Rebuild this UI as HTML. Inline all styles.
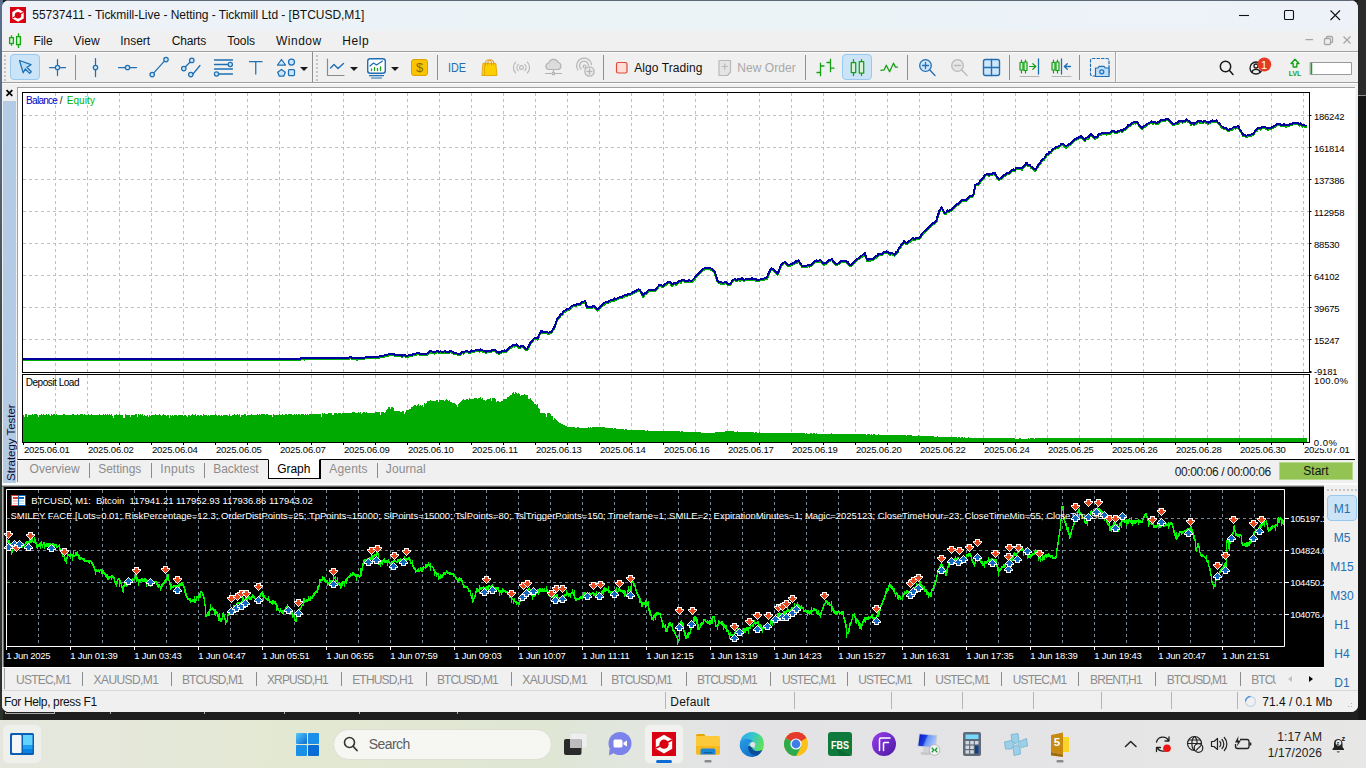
<!DOCTYPE html>
<html><head><meta charset="utf-8">
<style>
*{box-sizing:border-box;margin:0;padding:0}
html,body{width:1366px;height:768px;overflow:hidden}
body{background:#1f1f1f;font-family:"Liberation Sans",sans-serif;font-size:12px;color:#000;position:relative}
.abs{position:absolute}
#win{position:absolute;left:2px;top:0;width:1356px;height:712px;background:#f0f0f0;border-radius:8px 8px 7px 7px;overflow:hidden}
#title{position:absolute;left:0;top:0;width:100%;height:31px;background:linear-gradient(90deg,#eef2f8 0%,#ebf3f7 35%,#ebf3f7 65%,#eef2f8 100%);border-top:1px solid #5c6874}
#title .t{position:absolute;left:30px;top:8px;font-size:13px;color:#1a1a1a;white-space:nowrap}
#menu{position:absolute;left:0;top:31px;width:100%;height:21px;background:#f0f0f0}
#menu span{position:absolute;top:3px;font-size:13px;color:#1a1a1a}
#tbar{position:absolute;left:0;top:51px;width:100%;height:32px;background:#f0f0f0;border-top:1px solid #a0a0a0;border-bottom:1px solid #a0a0a0;box-shadow:inset 0 1px 0 #fbfbfb}
#tester{position:absolute;left:0;top:84px;width:1356px;height:400px;background:#f0f0f0}
#taskbar{position:absolute;left:0;top:720px;width:1366px;height:48px;background:linear-gradient(90deg,#e5e7de 0%,#e3e8d2 22%,#dfe6d4 40%,#e2e6e0 47%,#e3e3e6 54%,#e4e4e6 75%,#e7e7e6 100%)}

.sep{position:absolute;top:3px;width:1px;height:25px;background:#8e8e8e}
.grip{position:absolute;top:3px;width:2px;height:26px;background-image:repeating-linear-gradient(180deg,#c4c4c4 0 2px,transparent 2px 4px)}
.ic{position:absolute;overflow:visible}
.selbtn{position:absolute;top:2px;height:26px;background:#cce4f7;border:1px solid #99c9ef;border-radius:4px}
.dd{position:absolute;top:15px;width:0;height:0;border-left:4px solid transparent;border-right:4px solid transparent;border-top:4px solid #1a1a1a}
.ttxt{position:absolute;top:8px;font-size:12px;white-space:nowrap}

.ax{position:absolute;font-size:9.5px;letter-spacing:-.22px;color:#000;white-space:nowrap;line-height:11px}
.cax{position:absolute;font-size:9.5px;letter-spacing:-.22px;color:#fff;white-space:nowrap;line-height:11px}
.ttab{position:absolute;top:462px;font-size:12px;color:#8c8c8c;white-space:nowrap}
.tsep{position:absolute;top:463px;width:1px;height:15px;background:#8c8c8c}
.ctab{position:absolute;top:673px;font-size:12px;color:#8c8c8c;white-space:nowrap}
.csep{position:absolute;top:672px;width:1px;height:14px;background:#8c8c8c}
.tf{position:absolute;left:1325px;width:34px;text-align:center;font-size:12px;color:#1e6fb4;line-height:16px}
</style></head><body>
<div class="abs" style="left:1358px;top:0;width:8px;height:720px;background:#161616"></div><div class="abs" style="left:1358px;top:0;width:8px;height:96px;background:#2b2b2b;border-bottom:1px solid #8a8a8a"></div>
<div class="abs" style="left:0;top:0;width:3px;height:720px;background:linear-gradient(180deg,#586e8a 0,#566a80 20%,#3a4440 50%,#2a302a 100%)"></div>
<div id="win">
 <div id="title"></div>
 <div id="menu"></div>
 
<svg class="ic" style="left:0;top:0" width="1356" height="52" viewBox="2 0 1356 52" fill="none">
 <rect x="10" y="7" width="16" height="16" fill="#d90012"/>
 <path d="M18 8.700L23.700 12V18.600L18 21.700L12.300 18.600V12Z" fill="#fff"/>
 <circle cx="18" cy="15.200" r="3.200" fill="#d90012"/>
 <path d="M12.500 18L23.500 12.200" stroke="#d90012" stroke-width="1.300"/>
 <!-- menu candles -->
 <g stroke="#12a812" stroke-width="1.300"><path d="M11.500 35.300V45.800M18.500 33.300V48"/><rect x="9.600" y="37.700" width="3.800" height="5.800" fill="#d6f5d6"/><rect x="16.600" y="36.600" width="3.800" height="8" fill="#d6f5d6"/></g>
 <!-- window controls -->
 <g stroke="#111" stroke-width="1.100"><path d="M1239 15.500H1249"/><rect x="1284.500" y="10.500" width="9" height="9" rx="1"/><path d="M1330.500 10.500L1340 20M1340 10.500L1330.500 20"/></g>
 <g stroke="#a6a6a6" stroke-width="1.300"><path d="M1305.500 39.600H1313"/><rect x="1324.500" y="38.500" width="6" height="6" rx="1"/><path d="M1326.500 38.500V37.500A1 1 0 0 1 1327.500 36.500H1331.500A1 1 0 0 1 1332.500 37.500V41.500A1 1 0 0 1 1331.500 42.500H1330.500"/><path d="M1343.500 36.500L1350.500 43.500M1350.500 36.500L1343.500 43.500"/></g>
</svg>
<div id="tbar">
<div class="grip" style="left:2px"></div>
<div class="selbtn" style="left:8px;width:30px"></div>
<svg class="ic" style="left:0;top:1px" width="1356" height="30" viewBox="2 53 1356 30" fill="none" stroke="#1e6fb4" stroke-width="1.25" stroke-linecap="round" stroke-linejoin="round">
 <!-- cursor -->
 <path d="M19.5 60.5 L31 64.7 L27 67.3 L31.3 71.8 L29.6 73.4 L25.3 69 L23.2 72.8 Z" fill="#b7dcf7"/>
 <!-- crosshair -->
 <path d="M49.5 67.5H54.5M60.5 67.5H65.5M57.5 59.5V64.5M57.5 70.5V75.5"/><circle cx="57.5" cy="67.5" r="2.2" fill="#cde6fa"/>
 <!-- vline -->
 <path d="M95.5 58.5V64.8M95.5 70.2V76.5"/><circle cx="95.5" cy="67.5" r="2.2" fill="#cde6fa"/>
 <!-- hline -->
 <path d="M118.5 67.5H124.8M130.2 67.5H136.5"/><circle cx="127.5" cy="67.5" r="2.2" fill="#cde6fa"/>
 <!-- trend -->
 <path d="M153.8 72.8L164.4 61.2"/><circle cx="152.2" cy="74.6" r="2.2" fill="#cde6fa"/><circle cx="166" cy="59.6" r="2.2" fill="#cde6fa"/>
 <!-- channel -->
 <path d="M185.2 67L190.2 62M193 74L200 65.5M182.5 69.5"/><circle cx="183.8" cy="68.6" r="2.2" fill="#cde6fa"/><circle cx="191.8" cy="60.4" r="2.2" fill="#cde6fa"/><circle cx="190.8" cy="74.6" r="2.2" fill="#cde6fa"/>
 <!-- fibo -->
 <path d="M214.5 60H232.5M214.5 64.5H228M219 74H232.5M214.5 69H232.5" stroke-width="1.3"/><circle cx="230.3" cy="64.5" r="2.1" fill="#cde6fa"/><circle cx="216.5" cy="74" r="2.1" fill="#cde6fa"/>
 <!-- T -->
 <path d="M249.500 61.700H262M255.750 61.700V74"/>
 <!-- shapes -->
 <g fill="#cde6fa"><path d="M277.5 65L281.5 59.5L285.5 65Z"/><circle cx="291.5" cy="62" r="3"/><path d="M281.5 69.5L285.3 72.3L283.8 76H279.2L277.7 72.3Z"/><rect x="288.5" y="69.5" width="6" height="6" rx="1"/></g>
</svg>
<div class="sep" style="left:73px"></div>
<div class="dd" style="left:298px"></div>
<div class="sep" style="left:310px;top:0;height:30px"></div>
<div class="grip" style="left:314px"></div>

<div class="selbtn" style="left:840px;width:30px"></div>
<svg class="ic" style="left:0;top:1px" width="1356" height="30" viewBox="2 53 1356 30" fill="none" stroke-width="1.4" stroke-linecap="round" stroke-linejoin="round">
 <!-- line chart dropdown -->
 <path d="M327.5 59V75.5H344" stroke="#8a8a8a" stroke-width="1.2"/><path d="M330.5 68L334 64.5L338 68.5L343.5 63.5" stroke="#1e6fb4"/>
 <!-- indicators -->
 <rect x="367.7" y="58.7" width="17.6" height="14.6" rx="2.5" stroke="#1e6fb4" fill="#fff"/>
 <path d="M370 66L373.5 63L376.5 65L382.5 61" stroke="#1e6fb4" stroke-width="1.2"/>
 <path d="M371.5 70.5V69M374.5 70.5V67.5M377.5 70.5V68.5M380.500 70.5V67" stroke="#1aa01a" stroke-width="1.3"/>
 <path d="M369.5 75.7H383.500M371.500 78H381.500" stroke="#1e6fb4" stroke-width="1.2"/>
 <!-- dollar -->
 <rect x="411.500" y="59.500" width="16" height="16" rx="2.5" fill="#fbc400" stroke="#e0a000" stroke-width="1"/>
 <text x="419.500" y="72" font-family="Liberation Sans" font-size="13" fill="#8a6a00" stroke="none" text-anchor="middle">$</text>
 <!-- IDE -->
 <text x="457" y="72" font-family="Liberation Sans" font-size="13" fill="#1e6fb4" stroke="none" text-anchor="middle" textLength="18" lengthAdjust="spacingAndGlyphs">IDE</text>
 <!-- bag -->
 <path d="M485.500 66.500V62.800A3 3 0 0 1 491.500 62.800V66.500M487.800 66.500V62.800A3 3 0 0 1 493.800 62.800V66.500" stroke="#dc9c24" stroke-width="1"/>
 <path d="M483.300 63.300H495.800L497 75.500H482.200Z" fill="#fcd000" stroke="#e2a400" stroke-width=".9"/>
 <path d="M485 63.300L484.300 75.500" stroke="#e2a400" stroke-width=".9"/>
 <path d="M485.500 65V63.300M491.500 65V63.300M487.800 65V63.300M493.800 65V63.300" stroke="#dc9c24" stroke-width="1"/>
 <!-- signal -->
 <g stroke="#b8b8b8" stroke-width="1.200"><circle cx="521.500" cy="67.500" r="1.900"/><path d="M518.200 64.300A4.600 4.600 0 0 0 518.200 70.700M524.800 64.300A4.600 4.600 0 0 1 524.800 70.700M515.600 62.200A7.600 7.600 0 0 0 515.600 72.800M527.400 62.200A7.600 7.600 0 0 1 527.400 72.800"/></g>
 <!-- cloud -->
 <g stroke="#b4b4b4" stroke-width="1.2"><path d="M548.500 69.500A3.300 3.300 0 0 1 548.800 63A5 5 0 0 1 558.300 62.500A3.600 3.600 0 0 1 558 69.500Z" fill="#dcdcdc"/><path d="M553.500 69.500V73.500M545.500 73.500H561.500"/><circle cx="553.500" cy="73.500" r="1.300" fill="#dcdcdc"/></g>
 <!-- vps circles -->
 <g stroke="#b4b4b4" stroke-width="1.200"><path d="M578 70A7.500 7.500 0 1 1 591.500 64.500M581 69A4.500 4.500 0 1 1 588.500 65.500"/><circle cx="584.500" cy="66.500" r="1.500"/><circle cx="589.500" cy="71.500" r="4.700" fill="#e6e6e6"/><path d="M587 71.500H592M589.500 69V74"/></g>
 <!-- algo red square -->
 <rect x="616.500" y="62.500" width="10.500" height="10.500" rx="1.500" fill="#fbdcd7" stroke="#e04a3a" stroke-width="1.200"/>
 <!-- new order -->
 <g stroke="#b9b9b9" stroke-width="1.200"><path d="M719 60.500H730.500V72L727.500 75.500H719Z" fill="#e4e4e4"/><path d="M722 66.500H727.500M724.750 63.800V69.300"/></g>
 <!-- bar chart -->
 <g stroke="#14a014" stroke-width="1.300"><path d="M820.500 63.200V75.700M820.500 66H824M817 72.500H820.500M830.500 59.200V71.700M827 62.500H830.500M830.500 68.200H834"/></g>
 <!-- candles -->
 <g stroke="#14a014" stroke-width="1.250"><path d="M853.500 59.500V75.500M861.500 59.500V75.500"/><rect x="851.300" y="62.500" width="4.400" height="10" fill="#d8f2d8"/><rect x="859.300" y="61.500" width="4.400" height="11.500" fill="#d8f2d8"/></g>
 <!-- line -->
 <path d="M881 70.400L884.300 69.800L886.300 65.200L889.600 71.700L893.500 63.200L895.500 67.100H897.500" stroke="#14a014" stroke-width="1.300"/>
 <!-- zoom in -->
 <g stroke="#1e6fb4" stroke-width="1.300"><circle cx="925.500" cy="65.500" r="5.800" fill="#cfe6fa"/><path d="M929.800 70L935 75.500M922.500 65.500H928.500M925.500 62.500V68.500"/></g>
 <!-- zoom out -->
 <g stroke="#b9b9b9" stroke-width="1.300"><circle cx="957.500" cy="65.500" r="5.800" fill="#e6e6e6"/><path d="M961.800 70L967 75.500M954.500 65.500H960.500"/></g>
 <!-- grid -->
 <rect x="983.500" y="59.500" width="16" height="16" rx="2" fill="#cfe6fa" stroke="#1e6fb4"/><path d="M991.500 59.500V75.500M983.500 67.500H999.500" stroke="#1e6fb4"/>
 <!-- scroll to end -->
 <g stroke="#14a014" stroke-width="1.200"><path d="M1021.500 60V73M1025.500 60V73"/><rect x="1020" y="62.500" width="3" height="7.500" fill="#d8f2d8"/><rect x="1024" y="62" width="3" height="8.500" fill="#d8f2d8"/><path d="M1029.500 66.500H1035.500M1032.800 63.700L1035.800 66.500L1032.800 69.300"/></g>
 <path d="M1038.500 59V74" stroke="#1e6fb4" stroke-width="1.300"/>
 <path d="M1020 76.500H1039" stroke="#b4b4b4" stroke-width="1"/>
 <!-- shift -->
 <g stroke="#14a014" stroke-width="1.200"><path d="M1053.500 60V73M1057.500 60V73"/><rect x="1052" y="62.500" width="3" height="7.500" fill="#d8f2d8"/><rect x="1056" y="62" width="3" height="8.500" fill="#d8f2d8"/></g>
 <g stroke="#1e6fb4" stroke-width="1.300"><path d="M1061.500 59V74M1064.500 66.500H1070.500M1067.300 63.700L1064.300 66.500L1067.300 69.300"/></g>
 <path d="M1052 76.500H1071" stroke="#b4b4b4" stroke-width="1"/>
 <!-- screenshot -->
 <rect x="1090.500" y="58.500" width="18.500" height="17.500" rx="2" stroke="#1e6fb4" stroke-dasharray="2.500 2" stroke-width="1.200"/>
 <path d="M1095.500 68H1098L1099.200 66.300H1104L1105.200 68H1109V76.500H1095.500Z" fill="#bfe0fa" stroke="#1e6fb4" stroke-width="1.200"/><circle cx="1101.800" cy="71.800" r="2" stroke="#1e6fb4" stroke-width="1.200"/>
 <!-- search -->
 <g stroke="#1a1a1a" stroke-width="1.500"><circle cx="1225.500" cy="66.500" r="5.200"/><path d="M1229.500 70.500L1233 74.500"/></g>
 <!-- account -->
 <g stroke="#1a1a1a" stroke-width="1.300"><circle cx="1256" cy="68" r="6"/><circle cx="1256" cy="66" r="2"/><path d="M1251.800 72.300A4.500 4.500 0 0 1 1260.200 72.300"/></g>
 <circle cx="1264.300" cy="64.500" r="6.900" fill="#e53a24" stroke="none"/>
 <text x="1264" y="68.500" font-family="Liberation Sans" font-size="11" fill="#fff" stroke="none" text-anchor="middle">1</text>
 <!-- LVL -->
 <path d="M1295 59.200L1299 63.500H1296.800V67H1293.200V63.500H1291Z" stroke="#14a014" stroke-width="1.300"/>
 <text x="1295" y="75.500" font-family="Liberation Sans" font-size="7.500" font-weight="bold" fill="#14a014" stroke="none" text-anchor="middle" textLength="12.500" lengthAdjust="spacingAndGlyphs">LVL</text>
 <rect x="1310.500" y="62.500" width="41" height="12" fill="#fff" stroke="#9a9a9a" stroke-width="1"/><path d="M1311.500 63V74" stroke="#14a014" stroke-width="1.500" stroke-linecap="butt"/>
</svg>
<div class="dd" style="left:348px"></div>
<div class="dd" style="left:389px"></div>
<div class="sep" style="left:435px"></div>
<div class="sep" style="left:601px"></div>
<div class="sep" style="left:803px"></div>
<div class="sep" style="left:905px"></div>
<div class="sep" style="left:1007px"></div>
<div class="sep" style="left:1077px"></div>
<div class="sep" style="left:1113px;top:0;height:30px;background:#a8a8a8;box-shadow:1px 0 0 #fafafa"></div>
</div>
 <div id="tester"></div></div>
<div class="abs" style="left:32.3px;top:8px;font-size:12px;letter-spacing:-0.03px;color:#111;white-space:nowrap;">55737411 - Tickmill-Live - Netting - Tickmill Ltd - [BTCUSD,M1]</div><div class="abs" style="left:33.5px;top:34px;font-size:12px;letter-spacing:-0.07px;color:#111;white-space:nowrap;">File</div><div class="abs" style="left:73.5px;top:34px;font-size:12px;letter-spacing:0.11px;color:#111;white-space:nowrap;">View</div><div class="abs" style="left:120.3px;top:34px;font-size:12px;letter-spacing:-0.04px;color:#111;white-space:nowrap;">Insert</div><div class="abs" style="left:171.8px;top:34px;font-size:12px;letter-spacing:-0.20px;color:#111;white-space:nowrap;">Charts</div><div class="abs" style="left:227.3px;top:34px;font-size:12px;letter-spacing:-0.05px;color:#111;white-space:nowrap;">Tools</div><div class="abs" style="left:276.0px;top:34px;font-size:12px;letter-spacing:0.49px;color:#111;white-space:nowrap;">Window</div><div class="abs" style="left:342.3px;top:34px;font-size:12px;letter-spacing:0.55px;color:#111;white-space:nowrap;">Help</div><div class="abs" style="left:634.3px;top:61px;font-size:12px;letter-spacing:0.07px;color:#111;white-space:nowrap;">Algo Trading</div><div class="abs" style="left:737.3px;top:61px;font-size:12px;letter-spacing:0.04px;color:#a8a8a8;white-space:nowrap;">New Order</div>

<div class="abs" style="left:2px;top:83px;width:1356px;height:1px;background:#fcfcfc"></div>
<div class="abs" style="left:3px;top:101px;width:13px;height:382px;background:#b4cbe6"></div>
<div class="abs" style="left:17px;top:461px;width:1px;height:21px;background:#8c8c8c"></div>
<svg class="abs" style="left:5px;top:89px" width="9" height="8" viewBox="0 0 9 8"><path d="M1.5 1.200L7.300 6.800M7.300 1.200L1.500 6.800" stroke="#000" stroke-width="1.700"/></svg>
<div class="abs" style="left:4.8px;top:481.2px;transform-origin:0 0;transform:rotate(-90deg);font-size:11.5px;letter-spacing:-0.04px;white-space:nowrap;color:#0c0c30;line-height:13px">Strategy Tester</div>
<div class="abs" style="left:17px;top:87px;width:1338px;height:373px;background:#fff;border-top:1px solid #a0a0a0;border-left:1px solid #a0a0a0;border-bottom:1px solid #000"></div>
<div class="abs" style="left:1355px;top:87px;width:1px;height:373px;background:#f8f8f8"></div>

<svg class="abs" style="left:0;top:0" width="1366" height="470" viewBox="0 0 1366 470" fill="none">
 <path d="M55.5 93V372M55.5 375V442M87.5 93V372M87.5 375V442M119.5 93V372M119.5 375V442M151.5 93V372M151.5 375V442M183.5 93V372M183.5 375V442M215.5 93V372M215.5 375V442M247.5 93V372M247.5 375V442M279.5 93V372M279.5 375V442M311.5 93V372M311.5 375V442M343.5 93V372M343.5 375V442M375.5 93V372M375.5 375V442M407.5 93V372M407.5 375V442M439.5 93V372M439.5 375V442M471.5 93V372M471.5 375V442M503.5 93V372M503.5 375V442M535.5 93V372M535.5 375V442M567.5 93V372M567.5 375V442M599.5 93V372M599.5 375V442M631.5 93V372M631.5 375V442M663.5 93V372M663.5 375V442M695.5 93V372M695.5 375V442M727.5 93V372M727.5 375V442M759.5 93V372M759.5 375V442M791.5 93V372M791.5 375V442M823.5 93V372M823.5 375V442M855.5 93V372M855.5 375V442M887.5 93V372M887.5 375V442M919.5 93V372M919.5 375V442M951.5 93V372M951.5 375V442M983.5 93V372M983.5 375V442M1015.5 93V372M1015.5 375V442M1047.5 93V372M1047.5 375V442M1079.5 93V372M1079.5 375V442M1111.5 93V372M1111.5 375V442M1143.5 93V372M1143.5 375V442M1175.5 93V372M1175.5 375V442M1207.5 93V372M1207.5 375V442M1239.5 93V372M1239.5 375V442M1271.5 93V372M1271.5 375V442M1303.5 93V372M1303.5 375V442M23 115.5H1309M23 147.5H1309M23 179.5H1309M23 211.5H1309M23 243.5H1309M23 275.5H1309M23 307.5H1309M23 339.5H1309" stroke="#c0c0c0" stroke-width="1" stroke-dasharray="3 3"/>
 <path d="M23 442V415H24V416.5H25V414H26V414H27V417H28V415H29V415H30V415H31V415H32V414H33V415H34V414H35V414H36V413.5H37V415H38V416.5H39V414.5H40V415H41V414H42V414.5H43V414H44V415H45V415H46V414H47V414.5H48V414H49V415H50V416H51V414H52V415H53V414H54V414H55V415H56V414H57V414.5H58V415H59V414.5H60V415H61V414.5H62V415H63V414H64V414H65V414.5H66V414.5H67V414.5H68V415H69V415H70V414.5H71V415H72V414H73V414H74V415H75V415H76V415H77V414H78V415H79V414.5H80V414H81V414H82V414H83V415H84V414H85V415H86V414.5H87V415H88V414H89V414.5H90V415H91V414H92V414.5H93V414.5H94V414.5H95V414.5H96V415H97V414.5H98V415H99V414H100V414.5H101V414.5H102V414.5H103V414H104V415H105V414H106V414.5H107V414H108V414.5H109V414H110V415H111V414H112V415.5H113V417.5H114V414.5H115V415H116V414H117V414.5H118V415H119V414H120V414.5H121V414.5H122V414.5H123V417.5H124V417.5H125V414H126V415H127V414.5H128V415H129V415H130V417H131V414.5H132V415H133V414.5H134V414.5H135V414H136V414H137V417H138V414H139V415H140V414H141V414.5H142V414H143V415.5H144V415H145V415.5H146V415.5H147V414.5H148V417H149V415H150V415.5H151V415H152V415H153V414.5H154V415H155V414H156V414.5H157V415H158V414.5H159V414H160V415H161V415.5H162V415H163V414H164V415H165V415H166V415.5H167V414.5H168V414.5H169V418H170V414.5H171V415.5H172V415H173V415.5H174V415H175V415H176V414.5H177V416H178V414.5H179V414.5H180V415H181V414.5H182V415H183V415.5H184V414.5H185V415H186V415.5H187V417H188V415H189V415H190V415.5H191V414.5H192V414H193V415H194V414.5H195V414H196V415.5H197V414.5H198V415H199V415.5H200V414.5H201V414.5H202V415.5H203V414H204V415H205V415H206V414.5H207V416H208V415H209V415.5H210V414.5H211V414.5H212V415H213V415H214V414.5H215V414H216V414.5H217V415.5H218V414.5H219V414.5H220V415.5H221V415H222V415.5H223V415H224V415H225V415H226V414.5H227V415H228V415.5H229V414H230V415.5H231V415.5H232V415H233V415H234V414H235V414.5H236V415H237V414H238V415H239V414H240V417H241V415H242V415H243V414.5H244V414H245V414H246V416H247V414.5H248V414.5H249V415H250V415H251V414H252V414.5H253V414.5H254V414.5H255V415H256V415H257V414H258V415H259V414H260V414.5H261V414H262V414H263V414H264V414H265V414.5H266V414H267V414H268V414.5H269V414.5H270V414.5H271V415H272V416.5H273V414H274V414.5H275V415H276V414.5H277V414.5H278V414.5H279V414H280V415H281V414.5H282V414H283V414.5H284V414.5H285V414H286V414H287V415H288V414H289V414H290V414H291V414H292V414.5H293V415H294V414H295V414.5H296V414H297V414.5H298V414H299V413.5H300V414.5H301V414H302V414H303V414H304V414.5H305V414H306V414.5H307V413.5H308V414.5H309V414H310V414H311V414H312V414H313V413.5H314V414H315V413.5H316V413.5H317V413.5H318V414H319V414H320V413.5H321V416.5H322V413H323V414H324V413H325V413.5H326V413.5H327V414H328V413H329V413H330V413H331V412.5H332V414.5H333V415H334V413H335V413H336V412.5H337V413.5H338V412.5H339V413H340V412.5H341V413.5H342V413H343V412.5H344V412.5H345V413H346V412.5H347V413H348V413H349V413H350V412.5H351V412.5H352V412H353V412H354V412H355V412.5H356V412.5H357V413H358V411.5H359V413H360V412H361V413.5H362V413H363V412H364V411.5H365V412.5H366V411.5H367V412.5H368V412.5H369V412.5H370V412.5H371V412.5H372V412.5H373V412.5H374V412.5H375V411.5H376V411.5H377V411.5H378V411.5H379V412H380V415H381V412H382V412H383V411.5H384V412.5H385V412H386V409.5H387V409H388V406.5H389V406.5H390V409H391V406.5H392V407H393V408H394V411H395V411H396V411H397V411H398V411H399V411H400V412H401V411.5H402V411H403V411H404V414H405V411.5H406V410H407V409.5H408V410H409V409H410V408.5H411V407H412V406.5H413V406H414V405H415V404.5H416V405.5H417V404.5H418V404H419V405.5H420V405H421V406H422V405H423V407H424V403H425V403.5H426V403H427V401H428V401H429V401H430V400H431V400.5H432V400.5H433V400.5H434V400.5H435V400.5H436V399.5H437V399.5H438V402H439V400H440V400H441V400H442V399.5H443V399.5H444V401H445V400H446V399H447V400H448V400.5H449V400H450V401.5H451V402H452V402.5H453V403H454V403H455V404H456V404.5H457V407H458V404H459V402.5H460V402H461V400.5H462V399.5H463V399H464V399.5H465V399.5H466V398.5H467V399H468V399.5H469V398H470V399H471V398.5H472V399H473V398.5H474V398H475V398H476V397.5H477V398.5H478V398H479V397.5H480V397H481V398.5H482V398H483V399.5H484V399.5H485V400.5H486V399.5H487V399H488V398.5H489V398.5H490V398H491V400.5H492V397.5H493V398H494V398H495V399H496V402H497V401H498V401H499V402H500V401.5H501V401H502V401H503V399H504V398.5H505V399H506V398.5H507V396.5H508V396.5H509V396H510V395H511V394.5H512V393H513V392H514V393.5H515V392H516V393H517V394H518V393H519V394H520V396H521V394.5H522V394.5H523V394.5H524V394H525V394.5H526V395H527V395H528V398.5H529V398.5H530V397.5H531V400H532V400.5H533V402H534V404H535V403.5H536V404.5H537V404H538V407.5H539V409H540V413H541V412.5H542V412.5H543V412.5H544V413H545V413.5H546V416.5H547V413H548V413H549V412.5H550V413.5H551V415.5H552V415.5H553V420H554V418H555V418.5H556V420H557V420.5H558V422H559V422.5H560V423H561V423.5H562V424H563V424.5H564V425H565V425.5H566V426H567V426.5H568V426.5H569V426.5H570V427H571V426.5H572V427H573V427H574V427H575V427.5H576V427.5H577V427H578V427H579V427.5H580V427.5H581V428H582V427.5H583V428H584V427.5H585V428H586V427.5H587V427.5H588V427H589V427.5H590V427H591V427.5H592V427H593V426.5H594V427H595V426.5H596V426.5H597V426.5H598V426.5H599V426.5H600V426.5H601V427H602V427H603V427H604V427H605V427.5H606V427.5H607V427.5H608V427.5H609V427.5H610V428H611V427.5H612V428H613V428.5H614V428H615V428H616V428.5H617V428.5H618V428.5H619V429H620V428.5H621V428.5H622V429H623V429H624V429.5H625V429H626V429H627V429.5H628V429.5H629V429.5H630V430H631V430H632V430H633V430H634V430H635V430H636V430H637V430H638V430H639V430H640V430H641V430H642V430H643V430H644V430H645V430.5H646V430.5H647V430H648V430.5H649V430.5H650V430.5H651V430.5H652V430.5H653V430.5H654V430.5H655V430.5H656V430.5H657V430.5H658V431H659V431H660V430.5H661V430.5H662V430.5H663V430.5H664V431H665V431H666V431H667V431H668V431H669V430.5H670V431H671V431H672V431H673V431H674V431H675V431H676V431H677V431H678V431H679V431H680V431.5H681V431H682V431H683V431.5H684V431.5H685V431.5H686V431.5H687V431.5H688V431.5H689V431.5H690V431.5H691V431.5H692V431.5H693V431.5H694V431.5H695V432H696V432H697V432H698V432H699V432H700V432H701V432.5H702V432.5H703V432.5H704V432.5H705V432.5H706V433H707V433H708V433H709V433H710V433H711V433H712V432.5H713V432.5H714V432.5H715V432H716V432H717V432H718V432H719V431.5H720V432H721V432H722V431.5H723V431.5H724V431.5H725V431H726V431H727V431H728V431H729V431H730V431H731V431H732V431H733V431H734V431.5H735V431.5H736V431.5H737V431H738V431.5H739V431.5H740V431.5H741V431.5H742V431.5H743V431.5H744V432H745V431.5H746V432H747V431.5H748V431.5H749V432H750V432H751V432H752V432H753V432H754V432.5H755V432H756V432H757V432.5H758V432.5H759V432H760V432.5H761V432.5H762V432.5H763V432.5H764V432.5H765V433H766V432.5H767V433H768V433H769V433H770V432.5H771V433H772V433H773V433H774V432.5H775V433H776V432.5H777V433H778V433H779V433H780V433H781V433H782V433H783V433H784V433H785V433H786V433H787V433H788V433H789V433H790V433H791V433H792V433H793V433H794V433H795V433H796V433H797V433H798V433H799V433H800V433H801V433H802V433H803V433H804V433H805V433.5H806V433H807V433.5H808V433.5H809V433.5H810V433H811V433H812V433.5H813V433H814V433H815V433.5H816V433H817V433.5H818V433.5H819V433.5H820V433.5H821V433.5H822V433.5H823V433.5H824V433.5H825V433.5H826V433.5H827V433.5H828V433.5H829V433.5H830V433.5H831V433H832V433.5H833V433.5H834V433.5H835V433.5H836V433.5H837V433.5H838V433.5H839V433.5H840V433.5H841V434H842V433.5H843V433.5H844V433.5H845V433.5H846V433.5H847V434H848V433.5H849V433.5H850V433.5H851V434H852V434H853V434H854V434H855V434H856V433.5H857V433.5H858V433.5H859V434H860V434H861V433.5H862V434H863V434H864V434H865V434H866V434.5H867V434H868V434H869V434H870V434.5H871V434H872V434.5H873V434H874V434H875V434.5H876V434.5H877V434.5H878V434H879V434.5H880V434.5H881V434.5H882V434.5H883V434.5H884V435H885V434.5H886V434.5H887V434.5H888V434.5H889V435H890V434.5H891V434.5H892V434.5H893V435H894V435H895V435H896V435H897V434.5H898V434.5H899V435H900V435H901V435H902V435H903V435H904V435H905V435H906V435.5H907V435H908V435H909V435H910V435H911V435H912V435.5H913V435.5H914V435.5H915V435.5H916V435.5H917V435.5H918V435H919V435.5H920V435.5H921V435.5H922V436H923V436H924V435.5H925V436H926V436H927V436H928V436H929V436H930V436H931V436H932V436H933V436H934V436.5H935V436.5H936V436.5H937V436H938V436.5H939V436.5H940V436.5H941V437H942V436.5H943V436.5H944V436.5H945V437H946V437H947V437H948V436.5H949V437H950V437H951V437H952V437H953V437H954V437H955V437H956V437H957V437.5H958V437H959V437H960V437.5H961V437H962V437H963V437.5H964V437H965V437.5H966V437.5H967V437.5H968V437H969V437.5H970V437.5H971V437.5H972V437.5H973V437.5H974V437.5H975V437.5H976V437.5H977V437.5H978V437.5H979V437.5H980V437.5H981V438H982V437.5H983V437.5H984V437.5H985V437.5H986V437.5H987V438H988V437.5H989V437.5H990V438H991V437.5H992V438H993V437.5H994V438H995V438H996V437.5H997V438H998V437.5H999V437.5H1000V438H1001V438H1002V438H1003V438H1004V438H1005V438H1006V438H1007V438H1008V438H1009V438H1010V438H1011V438H1012V438H1013V438H1014V438H1015V438.5H1016V438.5H1017V438.5H1018V438.5H1019V438H1020V438H1021V438.5H1022V439H1023V439H1024V439H1025V438.5H1026V438.5H1027V438.5H1028V438H1029V438.5H1030V438H1031V438H1032V438H1033V438H1034V438.5H1035V438H1036V438H1037V438H1038V438H1039V438H1040V438H1041V438H1042V438H1043V438H1044V438H1045V438H1046V438H1047V438H1048V438H1049V438H1050V438H1051V438H1052V438H1053V438H1054V438H1055V438H1056V438H1057V438H1058V438H1059V438H1060V438H1061V438H1062V438H1063V438H1064V438H1065V438H1066V438H1067V438H1068V438H1069V438H1070V438H1071V438H1072V438H1073V438H1074V438H1075V438H1076V438H1077V438H1078V438H1079V438H1080V438H1081V438H1082V438H1083V438H1084V438H1085V438H1086V438H1087V438H1088V438H1089V438H1090V438H1091V438H1092V438H1093V438H1094V438H1095V438H1096V438H1097V438H1098V438H1099V438H1100V438H1101V438H1102V438H1103V438H1104V438H1105V438H1106V438H1107V438H1108V438H1109V438H1110V438H1111V438H1112V438H1113V438H1114V438H1115V438H1116V438H1117V438H1118V438H1119V438H1120V438H1121V438H1122V438H1123V438H1124V438H1125V438H1126V438H1127V438H1128V438H1129V438H1130V438H1131V438H1132V438H1133V438H1134V438H1135V438H1136V438H1137V438H1138V438H1139V438H1140V438H1141V438H1142V438H1143V438H1144V438H1145V438H1146V438H1147V438H1148V438H1149V438H1150V438H1151V438H1152V438H1153V438H1154V438H1155V438H1156V438H1157V438H1158V438H1159V438H1160V438H1161V438H1162V438H1163V438H1164V438H1165V438H1166V438H1167V438H1168V438H1169V438H1170V438H1171V438H1172V438H1173V438H1174V438H1175V438H1176V438H1177V438H1178V438H1179V438H1180V438H1181V438H1182V438H1183V438H1184V438H1185V438H1186V438H1187V438H1188V438H1189V438H1190V438H1191V438H1192V438H1193V438H1194V438H1195V438H1196V438H1197V438H1198V438H1199V438H1200V438H1201V438H1202V438H1203V438H1204V438H1205V438H1206V438H1207V438H1208V438H1209V438H1210V438H1211V438H1212V438H1213V438H1214V438H1215V438H1216V438H1217V438H1218V438H1219V438H1220V438H1221V438H1222V438H1223V438H1224V438H1225V438H1226V438H1227V438H1228V438H1229V438H1230V438H1231V438H1232V438H1233V438H1234V438H1235V438H1236V438H1237V438H1238V438H1239V438H1240V438H1241V438H1242V438H1243V438H1244V438H1245V438H1246V438H1247V438H1248V438H1249V438H1250V438H1251V438H1252V438H1253V438H1254V438H1255V438H1256V438H1257V438H1258V438H1259V438H1260V438H1261V438H1262V438H1263V438H1264V438H1265V438H1266V438H1267V438H1268V438H1269V438H1270V438H1271V438H1272V438H1273V438H1274V438H1275V438H1276V438H1277V438H1278V438H1279V438H1280V438H1281V438H1282V438H1283V438H1284V438H1285V438H1286V438H1287V438H1288V438H1289V438H1290V438H1291V438H1292V438H1293V438H1294V438H1295V438H1296V438H1297V438H1298V438H1299V438H1300V438H1301V438H1302V438H1303V438H1304V438H1305V438H1306V438H1307V442Z" fill="#00aa00" shape-rendering="crispEdges"/>
 <path d="M23 360.4L24.3 360.4L25.6 360.4L26.9 360.4L28.2 360.4L29.5 360.4L30.8 360.4L32.1 360.4L33.4 360.4L34.7 360.4L36 360.4L37.3 360.4L38.6 360.4L39.9 360.4L41.2 360.4L42.5 360.4L43.8 360.4L45.1 360.4L46.4 360.4L47.7 360.4L49 360.4L50.4 360.4L51.7 360.4L53 360.4L54.3 360.4L55.6 360.4L56.9 360.4L58.2 360.4L59.5 360.4L60.8 360.4L62.1 360.4L63.4 360.4L64.7 360.4L66 360.4L67.3 360.4L68.6 360.4L69.9 360.4L71.2 360.4L72.5 360.4L73.8 360.4L75.1 360.4L76.4 360.4L77.7 360.4L79 360.4L80.3 360.4L81.6 360.4L82.9 360.4L84.2 360.4L85.5 360.4L86.8 360.4L88.1 360.4L89.4 360.4L90.7 360.4L92 360.4L93.3 360.4L94.6 360.4L95.9 360.4L97.2 360.4L98.5 360.4L99.8 360.4L101.1 360.4L102.4 360.4L103.8 360.4L105.1 360.4L106.4 360.4L107.7 360.4L109 360.4L110.3 360.4L111.6 360.4L112.9 360.4L114.2 360.4L115.5 360.4L116.8 360.4L118.1 360.4L119.4 360.4L120.7 360.4L122 360.4L123.3 360.4L124.6 360.4L125.9 360.4L127.2 360.4L128.5 360.4L129.8 360.4L131.1 360.4L132.4 360.4L133.7 360.4L135 360.4L136.3 360.4L137.6 360.4L138.9 360.4L140.2 360.4L141.5 360.4L142.8 360.4L144.1 360.4L145.4 360.4L146.7 360.4L148 360.4L149.3 360.4L150.6 360.4L151.9 360.4L153.2 360.4L154.5 360.4L155.8 360.4L157.2 360.4L158.5 360.4L159.8 360.4L161.1 360.4L162.4 360.4L163.7 360.4L165 360.4L166.3 360.4L167.6 360.4L168.9 360.4L170.2 360.4L171.5 360.4L172.8 360.4L174.1 360.4L175.4 360.4L176.7 360.4L178 360.4L179.3 360.4L180.6 360.4L181.9 360.4L183.2 360.4L184.5 360.4L185.8 360.4L187.1 360.4L188.4 360.4L189.7 360.4L191 360.4L192.3 360.4L193.6 360.4L194.9 360.4L196.2 360.4L197.5 360.4L198.8 360.4L200.1 360.4L201.4 360.4L202.7 360.4L204 360.4L205.3 360.4L206.6 360.4L207.9 360.4L209.2 360.4L210.6 360.4L211.9 360.4L213.2 360.4L214.5 360.4L215.8 360.4L217.1 360.4L218.4 360.4L219.7 360.4L221 360.4L222.3 360.4L223.6 360.4L224.9 360.4L226.2 360.4L227.5 360.4L228.8 360.4L230.1 360.4L231.4 360.4L232.7 360.4L234 360.4L235.3 360.4L236.6 360.4L237.9 360.4L239.2 360.4L240.5 360.4L241.8 360.4L243.1 360.4L244.4 360.4L245.7 360.4L247 360.4L248.3 360.4L249.6 360.4L250.9 360.4L252.2 360.4L253.5 360.4L254.8 360.4L256.1 360.4L257.4 360.4L258.7 360.4L260 360.4L261.3 360.4L262.6 360.4L264 360.4L265.3 360.4L266.6 360.4L267.9 360.4L269.2 360.4L270.5 360.4L271.8 360.4L273.1 360.4L274.4 360.4L275.7 360.4L277 360.4L278.3 360.4L279.6 360.4L280.9 360.4L282.2 360.4L283.5 360.4L284.8 360.4L286.1 360.4L287.4 360.4L288.7 360.4L290 360.4L291.3 360.4L292.7 360.4L294 360.4L295.3 360.4L296.6 360.4L298 360.4L299.3 360.4L300.6 359.5L302 359.4L303.3 359.3L304.6 359.6L306 359.4L307.3 359.1L308.7 359.1L310 359.1L311.3 359.4L312.7 359.4L314 359L315.4 359.3L316.7 359.4L318 359.2L319.4 359L320.7 359.1L322.1 358.8L323.4 358.8L324.8 359.2L326.1 359.1L327.4 359L328.8 359.2L330.1 358.9L331.5 359.1L332.8 359L334.1 358.7L335.5 358.7L336.8 358.7L338.2 358.6L339.5 358.8L340.9 359L342.2 359L343.6 359.2L345 359.4L346.5 359L348 359.1L349.5 358.5L351 358.3L353 359.4L354.4 359.4L355.8 359.4L357.1 359.6L358.5 359.3L359.9 359.5L361.2 359.2L362.6 359.2L364 359.1L366 357.9L367.4 358L368.8 357.7L370.2 357.9L371.6 357.8L372.9 357.7L374.3 358.1L375.7 357.8L377.1 357.9L378.5 357.9L380.4 357.1L381.9 357.1L383.5 356.8L385 356.5L386.3 356.1L387.7 355.8L389 355.3L390.6 355.4L392.1 355.5L393.7 355.3L395.6 356.3L396.9 356.1L398.2 356.4L399.5 356.2L400.8 355.9L402.1 356.8L403.5 356.4L404.8 356.5L406.1 356.8L407.4 357.1L408.7 356.2L410 356.3L411.3 356.2L412.6 355.6L414 355.2L415.3 355.2L416.6 354.4L418 354.4L419.4 354.6L420.8 354.6L422.2 355.5L423.6 355.1L425 354.8L426.4 355L427.9 354.5L429.4 352.7L430.8 352.5L432.2 352.8L433.6 353.5L435 353.5L436.4 352.3L437.8 352.4L439.2 353L440.6 352.5L442 353.3L443.4 352.8L444.8 352.4L446.2 353.3L447.6 353.4L449 353.5L450.4 352L451.8 352.5L453.2 353.6L454.6 354.1L456.1 353.8L457.5 355L459 355.2L460.5 354.9L462 353L463.5 353.9L465 352.5L466.3 352.3L467.6 352.3L468.9 353.1L470.2 352.7L471.5 351.4L472.8 351.8L474.2 351.8L475.5 351.4L476.8 351L478.1 351.1L479.4 351.8L480.7 350.4L482 351.1L483.3 351.8L484.7 352.2L486 352.9L487.5 351.7L489 351.9L490.6 352L492.1 351.5L493.6 351L494.9 350.7L496.3 352.9L497.6 353L499 353.8L500.3 353.4L501.6 352.4L503 352.3L504.3 351.5L505.7 352.4L507 351.5L508.4 349.9L509.9 348.3L511.3 347.6L512.7 346.4L514.6 346.6L516.5 345.3L518.4 347.4L519.8 348.1L521.2 347.2L522.6 347L524 347.8L525.5 349.8L527 350.2L528.5 347.5L530 344.4L531.9 342.4L533.8 339.6L535.7 338.9L537.6 339.6L539.5 335.1L541.4 332L542.8 333.1L544.3 333.5L545.6 333.3L547 332.5L548.3 334L549.7 333.3L551 332.9L552.9 330.6L554.7 327.2L556.2 322.7L557.6 319.6L559 318.6L560.5 315.6L561.9 315.4L563.3 313L564.8 311.9L566.4 310.6L567.9 309.9L569.5 309.5L571 307.6L572.4 306.8L573.8 306.2L575.2 306.5L576.7 305.6L578.1 305L579.5 305.3L580.9 304L582.4 303.1L583.8 302.7L585.2 302.5L587.1 308.2L588.6 307.8L590.1 307.7L591.7 308.4L593.2 307.4L594.7 307.6L596.2 309.1L597.6 310.5L599 308.8L600.4 307.9L601.9 306.1L603.3 305.4L604.7 303.8L606.1 303.4L607.5 303.3L609 302.5L610.4 301.3L611.9 301.3L613.3 301.5L614.7 299.5L616.2 300.3L617.6 299.1L619 298.5L620.4 298.1L621.7 298.2L623.1 296.9L624.5 296.6L625.9 296.4L627.3 296.4L628.7 294.7L630 295.1L631.4 294.3L632.8 293.4L634.1 293.2L635.4 292.2L636.8 291.6L638.1 290.5L639.4 290.8L641.3 293.1L643.2 296.8L644.8 294.3L646.4 293.8L648 291.5L649.4 291.1L650.9 290.9L652.3 290.8L653.7 291.5L655.1 290.8L656.5 289.4L658 287.7L659.4 285.9L661.3 286.3L663.2 287.3L664.7 285.7L666.1 284.6L667.5 283.7L669 282.5L670.4 283.5L671.8 285.8L673.1 285.1L674.4 284.2L675.7 284.9L677 284.4L678.4 283L679.7 281.9L681 282.7L682.3 281.2L684.1 281.6L686 282.5L687.5 282.1L688.9 281.4L690.3 281.9L691.8 281.9L693.3 280.3L694.8 278.8L696.4 276.6L697.9 275.6L699.4 273.9L701 271.6L702.6 270.7L704.2 269.6L705.5 268.9L706.8 269.5L708.2 268.8L709.5 268.8L710.8 269.6L712.5 270.5L714.2 272L715.9 276.4L717.5 281.6L718.9 282.8L720.3 283.5L721.7 283.5L723.1 283.8L724.6 283.5L726 283.1L727.5 284.7L728.9 285.4L730.5 284.5L732.1 282.1L733.7 280.6L735.1 280.2L736.5 281.3L737.8 279.7L739.2 280.7L740.6 280.5L742 279.3L743.4 280.6L744.8 280.6L746.1 280.1L747.5 280.2L748.9 279.6L750.4 280.4L751.9 279.4L753.5 280.3L755 280.5L756.5 280.6L757.8 281L759.1 280.7L760.4 280.5L761.8 279.9L763.1 280.2L764.4 279.6L765.7 279.3L767 278.8L768.4 275.1L769.9 271.6L771.3 269.2L772.8 270L774.3 271.8L775.9 272.8L777.4 274.9L779.3 270.8L781.2 265.4L783.1 264.3L785 262.9L786.5 264.7L788 265.9L789.5 265.8L790.9 265.5L792.3 264.7L793.8 264.3L795.4 262.4L796.9 262.8L798.5 261.1L800.5 264.6L802.4 267.2L803.8 267.1L805.2 267L806.6 267L808.1 265.8L809.5 266.8L810.9 266.2L812.3 264.6L813.8 263.1L815.2 262.3L816.6 261.5L818.2 262.1L819.8 261.3L821.4 261.9L823.3 264.9L824.7 264.6L826.2 264.2L827.6 262.5L829 261.5L830.5 260.8L831.9 260L833.8 263L835.7 265.3L837 265.3L838.3 264.4L839.7 263.9L841 262.3L842.3 262.4L844.2 261.8L846.1 262.4L847.7 263.3L849.3 265.4L850.9 266.2L852.3 264.6L853.8 263.8L855.2 261.6L856.6 260.4L858.1 259.5L859.5 258.6L861.2 257.4L862.9 255.9L864.6 254L866 257.9L867.4 261.1L868.8 260.5L870.1 260.6L871.4 260.3L872.8 260L874.1 258.9L875.4 257.3L876.8 257.6L878.1 255.3L879.4 254.8L880.9 255.3L882.4 254.7L884 252.6L885.5 252.9L887 252.6L888.5 253.8L890.1 254.7L891.6 254.4L893.2 254.8L894.7 255.8L896.1 253.4L897.4 252.7L898.8 249.5L900.1 248.2L901.5 245.4L902.8 244.2L904.2 242.2L905.6 243.9L907 244.1L908.6 241.9L910.2 241.7L911.8 239.7L913.1 239.5L914.5 240.1L915.8 239.7L917.2 238.7L918.5 239.1L919.9 238.4L921.2 236.3L922.6 234.1L923.9 232.7L925.3 232.2L926.6 230.8L928 229.6L929.4 227.9L930.8 226.2L932.2 225.3L933.7 223.9L935.1 223.5L936.5 221.6L938 215.9L939.4 212.1L941.7 208.2L943.2 211.6L944.7 214L946 213.8L947.4 211.7L948.7 212.3L950 211.1L951.4 210.7L952.7 209.2L954.1 207.6L955.4 206.6L956.8 205.5L958.1 205.4L959.5 203.5L960.8 202L962.2 201.1L964.1 200.9L966 201.1L967.5 199.6L968.9 198.2L970.4 197.2L971.8 197.5L973.3 195.8L975.2 186.3L976.6 185L978 185.3L979.4 183.6L980.7 181.5L982 179.9L983.4 178.8L984.7 176.6L986 175.6L987.4 175.1L988.9 175.8L990.3 175.4L991.7 175L993.2 174.5L994.6 174L996.2 176.7L997.7 178.8L999.3 180.1L1000.7 179.1L1002.2 178.4L1003.6 176.2L1005 176.4L1006.5 174.9L1007.9 174L1009.3 173.7L1010.6 172.9L1012 171.6L1013.3 170.5L1014.7 171.4L1016 169.3L1017.4 169.2L1019 169.3L1020.6 169.2L1022.2 169.7L1023.6 167.3L1025.1 166.1L1026.5 163.8L1028 165.8L1029.4 165.7L1030.9 167.6L1032.4 168.2L1033.8 169.9L1035.3 171L1036.8 168.7L1038.3 166.2L1039.9 164L1041.4 162L1042.9 160.5L1044.2 159.6L1045.5 157.4L1046.9 155.3L1048.2 155L1049.5 152.8L1050.9 152.9L1052.3 151.1L1053.7 149.7L1055.2 149.1L1056.6 148.1L1058 147.8L1059.4 147.2L1061.1 145.4L1062.7 145.1L1064.3 145.9L1066 147.8L1067.5 146L1069.1 145.3L1070.6 144.6L1072.2 143.1L1073.7 141.3L1075.2 140.4L1076.8 139.6L1078.3 139L1079.9 137.9L1081.4 137.3L1083.1 139.1L1084.7 141.3L1086 139.3L1087.3 138.5L1088.7 138.5L1090 135.7L1091.3 135.2L1092.9 137.1L1094.6 139L1095.9 138.2L1097.3 137.7L1098.7 135.6L1100 135.2L1101.4 134.5L1102.8 134.1L1104.1 134.1L1105.5 134L1106.9 134.6L1108.2 134.1L1109.6 133.9L1111 133L1112.4 132L1113.8 131.8L1115.1 132.9L1116.5 133.1L1117.9 132.2L1119.2 132.3L1120.6 131.1L1122 131.8L1123.3 130.4L1124.6 130.2L1126 128.8L1127.3 127.6L1128.6 125.8L1130.1 126.2L1131.5 124.4L1133 123.7L1134.5 123.4L1135.9 123.6L1137.4 123.2L1139.3 126.2L1141.3 128.7L1142.6 128.7L1144 127.5L1145.3 126.6L1146.6 126L1147.9 124.6L1149.3 124L1150.6 123.2L1151.9 122.4L1153.2 123.9L1154.6 123L1155.9 124.4L1157.2 123.8L1158.5 123.5L1159.8 122.3L1161.1 121.4L1162.5 121.1L1163.8 121.2L1165.1 120.8L1166.4 119.9L1167.8 120.3L1169.3 121.3L1170.7 123.2L1172.2 124.4L1173.6 125.4L1174.9 124.7L1176.2 123.9L1177.6 124.1L1178.9 122.5L1180.2 122.5L1181.5 122.3L1182.8 122.7L1184.2 121.7L1185.5 121.6L1186.8 120.5L1188.3 121.9L1189.7 122.9L1191.2 124.9L1192.6 124.1L1194 125L1195.4 124.2L1196.9 123.1L1198.3 122.3L1199.7 122.8L1201.1 122.5L1202.6 122.9L1204 122.5L1205.5 122.4L1207 123.2L1208.4 123.8L1209.9 123.2L1211.2 122.3L1212.5 121.7L1213.9 121.9L1215.2 121.7L1216.5 121.6L1217.9 123.5L1219.4 124.3L1220.8 126.5L1222.1 127.9L1223.4 128.6L1224.8 129.1L1226.1 129.4L1227.4 130.8L1228.8 131.3L1230.2 129.7L1231.5 130.2L1232.9 128.7L1234.3 128.3L1235.7 128.8L1237 127.6L1238.4 127.6L1240 131.3L1241.7 133.3L1243.3 136.2L1244.7 136.2L1246.1 137.3L1247.6 136.2L1249.2 135.9L1250.7 135.7L1252.3 135.5L1253.8 134.1L1255.2 132.1L1256.5 131.2L1257.9 129.5L1259.3 128.7L1260.7 129.6L1262.1 128.2L1263.5 128.1L1265 128.2L1266.4 128.9L1267.8 129.9L1269.2 129.2L1270.7 129.1L1272.3 127.9L1273.8 127.5L1275.4 126.5L1276.9 124.9L1278.3 124.8L1279.7 124.7L1281.1 126.3L1282.5 126.2L1283.9 125.2L1285.3 126.5L1286.7 126.5L1288.1 126L1289.5 125.7L1290.8 125.3L1292.2 124.8L1293.6 124.2L1295 124.4L1296.3 124.3L1297.7 124.2L1299.2 125.6L1300.6 124.7L1302.1 126.7L1303.6 125.9L1305 126.7L1306.5 127.6" stroke="#00b000" stroke-width="2" stroke-linejoin="round" shape-rendering="crispEdges"/>
 <path d="M23 359.3L24.3 359.3L25.6 359.3L26.9 359.3L28.2 359.3L29.5 359.3L30.8 359.3L32.1 359.3L33.4 359.3L34.7 359.3L36 359.3L37.3 359.3L38.6 359.3L39.9 359.3L41.2 359.3L42.5 359.3L43.8 359.3L45.1 359.3L46.4 359.3L47.7 359.3L49 359.3L50.4 359.3L51.7 359.3L53 359.3L54.3 359.3L55.6 359.3L56.9 359.3L58.2 359.3L59.5 359.3L60.8 359.3L62.1 359.3L63.4 359.3L64.7 359.3L66 359.3L67.3 359.3L68.6 359.3L69.9 359.3L71.2 359.3L72.5 359.3L73.8 359.3L75.1 359.3L76.4 359.3L77.7 359.3L79 359.3L80.3 359.3L81.6 359.3L82.9 359.3L84.2 359.3L85.5 359.3L86.8 359.3L88.1 359.3L89.4 359.3L90.7 359.3L92 359.3L93.3 359.3L94.6 359.3L95.9 359.3L97.2 359.3L98.5 359.3L99.8 359.3L101.1 359.3L102.4 359.3L103.8 359.3L105.1 359.3L106.4 359.3L107.7 359.3L109 359.3L110.3 359.3L111.6 359.3L112.9 359.3L114.2 359.3L115.5 359.3L116.8 359.3L118.1 359.3L119.4 359.3L120.7 359.3L122 359.3L123.3 359.3L124.6 359.3L125.9 359.3L127.2 359.3L128.5 359.3L129.8 359.3L131.1 359.3L132.4 359.3L133.7 359.3L135 359.3L136.3 359.3L137.6 359.3L138.9 359.3L140.2 359.3L141.5 359.3L142.8 359.3L144.1 359.3L145.4 359.3L146.7 359.3L148 359.3L149.3 359.3L150.6 359.3L151.9 359.3L153.2 359.3L154.5 359.3L155.8 359.3L157.2 359.3L158.5 359.3L159.8 359.3L161.1 359.3L162.4 359.3L163.7 359.3L165 359.3L166.3 359.3L167.6 359.3L168.9 359.3L170.2 359.3L171.5 359.3L172.8 359.3L174.1 359.3L175.4 359.3L176.7 359.3L178 359.3L179.3 359.3L180.6 359.3L181.9 359.3L183.2 359.3L184.5 359.3L185.8 359.3L187.1 359.3L188.4 359.3L189.7 359.3L191 359.3L192.3 359.3L193.6 359.3L194.9 359.3L196.2 359.3L197.5 359.3L198.8 359.3L200.1 359.3L201.4 359.3L202.7 359.3L204 359.3L205.3 359.3L206.6 359.3L207.9 359.3L209.2 359.3L210.6 359.3L211.9 359.3L213.2 359.3L214.5 359.3L215.8 359.3L217.1 359.3L218.4 359.3L219.7 359.3L221 359.3L222.3 359.3L223.6 359.3L224.9 359.3L226.2 359.3L227.5 359.3L228.8 359.3L230.1 359.3L231.4 359.3L232.7 359.3L234 359.3L235.3 359.3L236.6 359.3L237.9 359.3L239.2 359.3L240.5 359.3L241.8 359.3L243.1 359.3L244.4 359.3L245.7 359.3L247 359.3L248.3 359.3L249.6 359.3L250.9 359.3L252.2 359.3L253.5 359.3L254.8 359.3L256.1 359.3L257.4 359.3L258.7 359.3L260 359.3L261.3 359.3L262.6 359.3L264 359.3L265.3 359.3L266.6 359.3L267.9 359.3L269.2 359.3L270.5 359.3L271.8 359.3L273.1 359.3L274.4 359.3L275.7 359.3L277 359.3L278.3 359.3L279.6 359.3L280.9 359.3L282.2 359.3L283.5 359.3L284.8 359.3L286.1 359.3L287.4 359.3L288.7 359.3L290 359.3L291.3 359.3L292.7 359.3L294 359.3L295.3 359.3L296.6 359.3L298 359.3L299.3 359.3L300.6 358.4L302 358.3L303.3 358.2L304.6 358.4L306 358.3L307.3 358L308.7 357.9L310 357.9L311.3 358.3L312.7 358.2L314 357.8L315.4 358.2L316.7 358.2L318 358L319.4 357.9L320.7 357.9L322.1 357.7L323.4 357.6L324.8 358.1L326.1 357.9L327.4 357.8L328.8 358L330.1 357.7L331.5 357.9L332.8 357.9L334.1 357.5L335.5 357.5L336.8 357.5L338.2 357.5L339.5 357.6L340.9 357.8L342.2 357.8L343.6 358.1L345 358.3L346.5 357.8L348 358L349.5 357.4L351 357.2L353 358.3L354.4 358.2L355.8 358.3L357.1 358.4L358.5 358.1L359.9 358.3L361.2 358.1L362.6 358.1L364 358L366 356.8L367.4 356.8L368.8 356.5L370.2 356.8L371.6 356.6L372.9 356.5L374.3 357L375.7 356.6L377.1 356.8L378.5 356.8L380.4 356L381.9 355.9L383.5 355.6L385 355.4L386.3 354.9L387.7 354.6L389 354.2L390.6 354.2L392.1 354.4L393.7 354.2L395.6 355.2L396.9 355L398.2 355.2L399.5 355.1L400.8 354.8L402.1 355.7L403.5 355.2L404.8 355.3L406.1 355.7L407.4 355.9L408.7 355.1L410 355.2L411.3 355L412.6 354.4L414 354.1L415.3 354L416.6 353.3L418 353.3L419.4 353.5L420.8 353.5L422.2 354.4L423.6 354L425 353.7L426.4 353.8L427.9 353.3L429.4 351.5L430.8 351.4L432.2 351.6L433.6 352.4L435 352.3L436.4 351.1L437.8 351.2L439.2 351.9L440.6 351.3L442 352.2L443.4 351.6L444.8 351.2L446.2 352.2L447.6 352.3L449 352.3L450.4 350.9L451.8 351.4L453.2 352.4L454.6 352.9L456.1 352.6L457.5 353.9L459 354.1L460.5 353.7L462 351.9L463.5 352.7L465 351.4L466.3 351.1L467.6 351.2L468.9 352L470.2 351.6L471.5 350.3L472.8 350.6L474.2 350.7L475.5 350.2L476.8 349.9L478.1 350L479.4 350.6L480.7 349.2L482 350L483.3 350.7L484.7 351.1L486 351.8L487.5 350.6L489 350.7L490.6 350.9L492.1 350.3L493.6 349.9L494.9 349.6L496.3 351.7L497.6 351.9L499 352.7L500.3 352.3L501.6 351.2L503 351.1L504.3 350.3L505.7 351.3L507 350.4L508.4 348.7L509.9 347.2L511.3 346.4L512.7 345.3L514.6 345.5L516.5 344.2L518.4 346.3L519.8 346.9L521.2 346L522.6 345.9L524 346.6L525.5 348.6L527 349.1L528.5 346.3L530 343.3L531.9 341.3L533.8 338.5L535.7 337.8L537.6 338.5L539.5 333.9L541.4 330.9L542.8 332L544.3 332.4L545.6 332.1L547 331.4L548.3 332.8L549.7 332.2L551 331.8L552.9 329.5L554.7 326.1L556.2 321.6L557.6 318.5L559 317.5L560.5 314.4L561.9 314.2L563.3 311.9L564.8 310.7L566.4 309.5L567.9 308.8L569.5 308.3L571 306.5L572.4 305.7L573.8 305.1L575.2 305.4L576.7 304.5L578.1 303.9L579.5 304.2L580.9 302.9L582.4 302L583.8 301.6L585.2 301.4L587.1 307.1L588.6 306.6L590.1 306.5L591.7 307.2L593.2 306.2L594.7 306.5L596.2 308L597.6 309.4L599 307.6L600.4 306.8L601.9 305L603.3 304.2L604.7 302.6L606.1 302.3L607.5 302.2L609 301.3L610.4 300.1L611.9 300.1L613.3 300.4L614.7 298.4L616.2 299.1L617.6 298L619 297.4L620.4 297L621.7 297L623.1 295.7L624.5 295.4L625.9 295.2L627.3 295.2L628.7 293.6L630 293.9L631.4 293.2L632.8 292.3L634.1 292L635.4 291L636.8 290.4L638.1 289.3L639.4 289.6L641.3 292L643.2 295.7L644.8 293.2L646.4 292.6L648 290.4L649.4 290L650.9 289.8L652.3 289.7L653.7 290.4L655.1 289.6L656.5 288.3L658 286.5L659.4 284.8L661.3 285.1L663.2 286.2L664.7 284.5L666.1 283.4L667.5 282.5L669 281.4L670.4 282.4L671.8 284.6L673.1 283.9L674.4 283L675.7 283.7L677 283.2L678.4 281.9L679.7 280.8L681 281.5L682.3 280.1L684.1 280.4L686 281.4L687.5 281L688.9 280.2L690.3 280.7L691.8 280.8L693.3 279.2L694.8 277.6L696.4 275.5L697.9 274.4L699.4 272.8L701 270.5L702.6 269.5L704.2 268.5L705.5 267.8L706.8 268.3L708.2 267.7L709.5 267.6L710.8 268.5L712.5 269.3L714.2 270.9L715.9 275.2L717.5 280.5L718.9 281.6L720.3 282.4L721.7 282.4L723.1 282.7L724.6 282.4L726 282L727.5 283.5L728.9 284.3L730.5 283.4L732.1 280.9L733.7 279.5L735.1 279.1L736.5 280.2L737.8 278.6L739.2 279.5L740.6 279.3L742 278.1L743.4 279.5L744.8 279.5L746.1 278.9L747.5 279L748.9 278.5L750.4 279.3L751.9 278.3L753.5 279.1L755 279.3L756.5 279.5L757.8 279.9L759.1 279.6L760.4 279.4L761.8 278.7L763.1 279L764.4 278.4L765.7 278.2L767 277.6L768.4 273.9L769.9 270.4L771.3 268.1L772.8 268.9L774.3 270.7L775.9 271.7L777.4 273.8L779.3 269.7L781.2 264.3L783.1 263.2L785 261.8L786.5 263.5L788 264.8L789.5 264.6L790.9 264.3L792.3 263.6L793.8 263.2L795.4 261.2L796.9 261.6L798.5 260L800.5 263.5L802.4 266.1L803.8 265.9L805.2 265.8L806.6 265.9L808.1 264.7L809.5 265.7L810.9 265.1L812.3 263.5L813.8 262L815.2 261.2L816.6 260.4L818.2 260.9L819.8 260.1L821.4 260.8L823.3 263.8L824.7 263.4L826.2 263L827.6 261.3L829 260.3L830.5 259.7L831.9 258.9L833.8 261.9L835.7 264.2L837 264.1L838.3 263.3L839.7 262.7L841 261.1L842.3 261.3L844.2 260.7L846.1 261.3L847.7 262.1L849.3 264.3L850.9 265.1L852.3 263.5L853.8 262.7L855.2 260.4L856.6 259.2L858.1 258.4L859.5 257.5L861.2 256.2L862.9 254.7L864.6 252.8L866 256.7L867.4 260L868.8 259.3L870.1 259.5L871.4 259.1L872.8 258.9L874.1 257.8L875.4 256.1L876.8 256.5L878.1 254.2L879.4 253.7L880.9 254.1L882.4 253.6L884 251.5L885.5 251.8L887 251.4L888.5 252.6L890.1 253.6L891.6 253.3L893.2 253.6L894.7 254.7L896.1 252.2L897.4 251.6L898.8 248.3L900.1 247L901.5 244.3L902.8 243L904.2 241L905.6 242.8L907 242.9L908.6 240.8L910.2 240.5L911.8 238.5L913.1 238.4L914.5 239L915.8 238.5L917.2 237.5L918.5 237.9L919.9 237.3L921.2 235.2L922.6 233L923.9 231.6L925.3 231.1L926.6 229.7L928 228.4L929.4 226.7L930.8 225.1L932.2 224.1L933.7 222.7L935.1 222.3L936.5 220.4L938 214.8L939.4 210.9L941.7 207.1L943.2 210.4L944.7 212.8L946 212.6L947.4 210.5L948.7 211.2L950 210L951.4 209.5L952.7 208L954.1 206.5L955.4 205.5L956.8 204.3L958.1 204.3L959.5 202.4L960.8 200.8L962.2 199.9L964.1 199.8L966 199.9L967.5 198.5L968.9 197L970.4 196.1L971.8 196.3L973.3 194.7L975.2 185.2L976.6 183.9L978 184.1L979.4 182.4L980.7 180.3L982 178.8L983.4 177.6L984.7 175.4L986 174.4L987.4 173.9L988.9 174.7L990.3 174.3L991.7 173.9L993.2 173.3L994.6 172.8L996.2 175.6L997.7 177.7L999.3 178.9L1000.7 178L1002.2 177.3L1003.6 175L1005 175.3L1006.5 173.7L1007.9 172.8L1009.3 172.6L1010.6 171.7L1012 170.4L1013.3 169.3L1014.7 170.2L1016 168.1L1017.4 168.1L1019 168.2L1020.6 168.1L1022.2 168.5L1023.6 166.2L1025.1 165L1026.5 162.6L1028 164.7L1029.4 164.6L1030.9 166.5L1032.4 167L1033.8 168.7L1035.3 169.8L1036.8 167.5L1038.3 165L1039.9 162.9L1041.4 160.9L1042.9 159.3L1044.2 158.5L1045.5 156.2L1046.9 154.2L1048.2 153.9L1049.5 151.6L1050.9 151.7L1052.3 149.9L1053.7 148.6L1055.2 147.9L1056.6 146.9L1058 146.6L1059.4 146.1L1061.1 144.3L1062.7 143.9L1064.3 144.8L1066 146.6L1067.5 144.9L1069.1 144.2L1070.6 143.5L1072.2 141.9L1073.7 140.2L1075.2 139.2L1076.8 138.4L1078.3 137.8L1079.9 136.8L1081.4 136.2L1083.1 137.9L1084.7 140.2L1086 138.2L1087.3 137.3L1088.7 137.3L1090 134.6L1091.3 134L1092.9 135.9L1094.6 137.8L1095.9 137.1L1097.3 136.6L1098.7 134.4L1100 134L1101.4 133.3L1102.8 133L1104.1 133L1105.5 132.8L1106.9 133.4L1108.2 133L1109.6 132.7L1111 131.8L1112.4 130.8L1113.8 130.7L1115.1 131.8L1116.5 132L1117.9 131.1L1119.2 131.1L1120.6 129.9L1122 130.7L1123.3 129.3L1124.6 129L1126 127.6L1127.3 126.5L1128.6 124.6L1130.1 125L1131.5 123.3L1133 122.6L1134.5 122.2L1135.9 122.5L1137.4 122L1139.3 125.1L1141.3 127.5L1142.6 127.5L1144 126.3L1145.3 125.4L1146.6 124.8L1147.9 123.5L1149.3 122.9L1150.6 122L1151.9 121.3L1153.2 122.7L1154.6 121.9L1155.9 123.2L1157.2 122.6L1158.5 122.3L1159.8 121.1L1161.1 120.3L1162.5 119.9L1163.8 120.1L1165.1 119.6L1166.4 118.7L1167.8 119.1L1169.3 120.1L1170.7 122L1172.2 123.2L1173.6 124.2L1174.9 123.5L1176.2 122.7L1177.6 122.9L1178.9 121.4L1180.2 121.4L1181.5 121.2L1182.8 121.6L1184.2 120.5L1185.5 120.5L1186.8 119.3L1188.3 120.7L1189.7 121.8L1191.2 123.7L1192.6 122.9L1194 123.8L1195.4 123L1196.9 122L1198.3 121.1L1199.7 121.6L1201.1 121.3L1202.6 121.7L1204 121.4L1205.5 121.2L1207 122.1L1208.4 122.6L1209.9 122L1211.2 121.2L1212.5 120.5L1213.9 120.7L1215.2 120.6L1216.5 120.4L1217.9 122.4L1219.4 123.1L1220.8 125.3L1222.1 126.7L1223.4 127.5L1224.8 127.9L1226.1 128.3L1227.4 129.7L1228.8 130.1L1230.2 128.5L1231.5 129L1232.9 127.6L1234.3 127.1L1235.7 127.7L1237 126.4L1238.4 126.4L1240 130.1L1241.7 132.2L1243.3 135.1L1244.7 135.1L1246.1 136.2L1247.6 135L1249.2 134.7L1250.7 134.5L1252.3 134.4L1253.8 132.9L1255.2 130.9L1256.5 130L1257.9 128.3L1259.3 127.5L1260.7 128.4L1262.1 127L1263.5 127L1265 127.1L1266.4 127.7L1267.8 128.7L1269.2 128.1L1270.7 127.9L1272.3 126.8L1273.8 126.4L1275.4 125.4L1276.9 123.7L1278.3 123.6L1279.7 123.6L1281.1 125.2L1282.5 125.1L1283.9 124L1285.3 125.4L1286.7 125.3L1288.1 124.8L1289.5 124.5L1290.8 124.2L1292.2 123.6L1293.6 123L1295 123.3L1296.3 123.1L1297.7 123.1L1299.2 124.5L1300.6 123.5L1302.1 125.6L1303.6 124.8L1305 125.6L1306.5 126.4" stroke="#0000a0" stroke-width="2" stroke-linejoin="round" shape-rendering="crispEdges"/>
 <rect x="22.5" y="92.5" width="1287" height="280" stroke="#000" stroke-width="1"/>
 <rect x="22.5" y="374.5" width="1287" height="68" stroke="#000" stroke-width="1"/>
 <path d="M1309 115.5H1311.5M1309 147.5H1311.5M1309 179.5H1311.5M1309 211.5H1311.5M1309 243.5H1311.5M1309 275.5H1311.5M1309 307.5H1311.5M1309 339.5H1311.5M1309 371.5H1311.5M1309 372.5H1311.5" stroke="#000" stroke-width="1"/>
 <path d="M23.5 442V445M55.5 442V445M87.5 442V445M119.5 442V445M151.5 442V445M183.5 442V445M215.5 442V445M247.5 442V445M279.5 442V445M311.5 442V445M343.5 442V445M375.5 442V445M407.5 442V445M439.5 442V445M471.5 442V445M503.5 442V445M535.5 442V445M567.5 442V445M599.5 442V445M631.5 442V445M663.5 442V445M695.5 442V445M727.5 442V445M759.5 442V445M791.5 442V445M823.5 442V445M855.5 442V445M887.5 442V445M919.5 442V445M951.5 442V445M983.5 442V445M1015.5 442V445M1047.5 442V445M1079.5 442V445M1111.5 442V445M1143.5 442V445M1175.5 442V445M1207.5 442V445M1239.5 442V445M1271.5 442V445M1303.5 442V445" stroke="#000" stroke-width="1"/>
</svg>

<div class="abs" style="left:26.1px;top:95px;font-size:10px;letter-spacing:-0.72px;color:#0000c8;white-space:nowrap;">Balance</div><div class="abs" style="left:59.8px;top:95px;font-size:10px;letter-spacing:0.00px;color:#222;white-space:nowrap;">/</div><div class="abs" style="left:66.7px;top:95px;font-size:10px;letter-spacing:0.08px;color:#00b400;white-space:nowrap;">Equity</div><div class="abs" style="left:25.8px;top:377px;font-size:10px;letter-spacing:-0.48px;color:#000;white-space:nowrap;">Deposit Load</div>
<div class="ax" style="left:1314.0px;top:110.7px;letter-spacing:-0.25px;">186242</div><div class="ax" style="left:1314.0px;top:142.7px;letter-spacing:-0.25px;">161814</div><div class="ax" style="left:1314.0px;top:174.7px;letter-spacing:-0.25px;">137386</div><div class="ax" style="left:1314.0px;top:206.7px;letter-spacing:-0.11px;">112958</div><div class="ax" style="left:1314.0px;top:238.7px;letter-spacing:-0.22px;">88530</div><div class="ax" style="left:1314.0px;top:270.7px;letter-spacing:-0.22px;">64102</div><div class="ax" style="left:1314.0px;top:302.7px;letter-spacing:-0.22px;">39675</div><div class="ax" style="left:1314.0px;top:334.7px;letter-spacing:-0.22px;">15247</div><div class="ax" style="left:1314.0px;top:366px;letter-spacing:-0.19px;height:8.8px;overflow:hidden">-9181</div><div class="ax" style="left:1314.0px;top:375px;letter-spacing:0.36px;">100.0%</div><div class="ax" style="left:23.9px;top:444.2px;letter-spacing:-0.17px;">2025.06.01</div><div class="ax" style="left:87.9px;top:444.2px;letter-spacing:-0.17px;">2025.06.02</div><div class="ax" style="left:151.9px;top:444.2px;letter-spacing:-0.17px;">2025.06.04</div><div class="ax" style="left:215.9px;top:444.2px;letter-spacing:-0.17px;">2025.06.05</div><div class="ax" style="left:279.9px;top:444.2px;letter-spacing:-0.17px;">2025.06.07</div><div class="ax" style="left:343.9px;top:444.2px;letter-spacing:-0.17px;">2025.06.09</div><div class="ax" style="left:407.9px;top:444.2px;letter-spacing:-0.17px;">2025.06.10</div><div class="ax" style="left:471.9px;top:444.2px;letter-spacing:-0.09px;">2025.06.11</div><div class="ax" style="left:535.9px;top:444.2px;letter-spacing:-0.17px;">2025.06.13</div><div class="ax" style="left:599.9px;top:444.2px;letter-spacing:-0.17px;">2025.06.14</div><div class="ax" style="left:663.9px;top:444.2px;letter-spacing:-0.17px;">2025.06.16</div><div class="ax" style="left:727.9px;top:444.2px;letter-spacing:-0.17px;">2025.06.17</div><div class="ax" style="left:791.9px;top:444.2px;letter-spacing:-0.17px;">2025.06.19</div><div class="ax" style="left:855.9px;top:444.2px;letter-spacing:-0.17px;">2025.06.20</div><div class="ax" style="left:919.9px;top:444.2px;letter-spacing:-0.17px;">2025.06.22</div><div class="ax" style="left:983.9px;top:444.2px;letter-spacing:-0.17px;">2025.06.24</div><div class="ax" style="left:1047.9px;top:444.2px;letter-spacing:-0.17px;">2025.06.25</div><div class="ax" style="left:1111.9px;top:444.2px;letter-spacing:-0.17px;">2025.06.26</div><div class="ax" style="left:1175.9px;top:444.2px;letter-spacing:-0.17px;">2025.06.28</div><div class="ax" style="left:1239.9px;top:444.2px;letter-spacing:-0.17px;">2025.06.30</div><div class="ax" style="left:1303.9px;top:444.2px;letter-spacing:-0.17px;">2025.07.01</div><div class="ax" style="left:1313.8px;top:437px;letter-spacing:0.53px;background:#fff;height:10.5px;line-height:11px;overflow:hidden;padding-right:2px">0.0%</div>
<div class="abs" style="left:268px;top:459px;width:52px;height:20px;background:#fff;border:1px solid #000;border-top:1px solid #fff;box-shadow:1px 0 0 #000"></div>
<div class="abs" style="left:277.3px;top:462px;font-size:12px;letter-spacing:-0.06px;color:#000;white-space:nowrap;">Graph</div>
<div class="abs" style="left:29.6px;top:462px;font-size:12px;letter-spacing:0.00px;color:#8c8c8c;white-space:nowrap;">Overview</div><div class="abs" style="left:98.3px;top:462px;font-size:12px;letter-spacing:-0.05px;color:#8c8c8c;white-space:nowrap;">Settings</div><div class="abs" style="left:160.3px;top:462px;font-size:12px;letter-spacing:0.33px;color:#8c8c8c;white-space:nowrap;">Inputs</div><div class="abs" style="left:213.3px;top:462px;font-size:12px;letter-spacing:-0.10px;color:#8c8c8c;white-space:nowrap;">Backtest</div><div class="abs" style="left:329.3px;top:462px;font-size:12px;letter-spacing:0.19px;color:#8c8c8c;white-space:nowrap;">Agents</div><div class="abs" style="left:385.8px;top:462px;font-size:12px;letter-spacing:0.08px;color:#8c8c8c;white-space:nowrap;">Journal</div><div class="tsep" style="left:89px"></div><div class="tsep" style="left:151px"></div><div class="tsep" style="left:204px"></div><div class="tsep" style="left:377px"></div>
<div class="abs" style="left:1174.7px;top:465px;font-size:12px;letter-spacing:-0.39px;color:#1a1a1a;white-space:nowrap;">00:00:06 / 00:00:06</div>
<div class="abs" style="left:1279px;top:462px;width:74px;height:18px;background:#92c353;border:1px solid #b4d98a;color:#111;font-size:12px;text-align:center;line-height:16px">Start</div>
<div class="abs" style="left:2px;top:483px;width:1356px;height:2px;background:#fcfcfc"></div>
<div class="abs" style="left:2px;top:485px;width:1322px;height:1px;background:#bdbdbd"></div>
<div class="abs" style="left:2px;top:486px;width:1322px;height:1px;background:#686868"></div>


<div class="abs" style="left:4px;top:487px;width:1320px;height:180px;background:#000"></div>
<div class="abs" style="left:2px;top:487px;width:1px;height:180px;background:#b4b4b4"></div><div class="abs" style="left:3px;top:487px;width:1px;height:180px;background:#6c6c6c"></div>

<svg class="abs" style="left:0;top:486px" width="1366" height="181" viewBox="0 486 1366 181" fill="none">
 <path d="M38.5 490V646M70.5 490V646M102.5 490V646M134.5 490V646M166.5 490V646M198.5 490V646M230.5 490V646M262.5 490V646M294.5 490V646M326.5 490V646M358.5 490V646M390.5 490V646M422.5 490V646M454.5 490V646M486.5 490V646M518.5 490V646M550.5 490V646M582.5 490V646M614.5 490V646M646.5 490V646M678.5 490V646M710.5 490V646M742.5 490V646M774.5 490V646M806.5 490V646M838.5 490V646M870.5 490V646M902.5 490V646M934.5 490V646M966.5 490V646M998.5 490V646M1030.5 490V646M1062.5 490V646M1094.5 490V646M1126.5 490V646M1158.5 490V646M1190.5 490V646M1222.5 490V646M1254.5 490V646M7 518.5H1284M7 550.5H1284M7 582.5H1284M7 614.5H1284" stroke="#778899" stroke-width="1" stroke-dasharray="3 3"/>
 <path d="M7.5 539V543M8.5 540V543M9.5 540V545M10.5 543V551M11.5 550V555M12.5 545V553M13.5 544V548M14.5 544V548M15.5 544V547M16.5 546V548M17.5 543V548M18.5 541V546M19.5 545V548M20.5 544V548M21.5 544V546M22.5 543V548M23.5 543V545M24.5 544V547M25.5 542V545M26.5 541V544M27.5 541V544M28.5 541V545M29.5 539V544M30.5 540V543M31.5 539V543M32.5 538V542M33.5 541V543M34.5 537V543M35.5 539V544M36.5 542V548M37.5 544V549M38.5 544V547M39.5 543V547M40.5 542V549M41.5 541V546M42.5 544V548M43.5 542V545M44.5 542V549M45.5 544V547M46.5 543V547M47.5 543V547M48.5 543V547M49.5 543V546M50.5 543V546M51.5 544V546M52.5 543V546M53.5 543V546M54.5 544V547M55.5 544V546M56.5 544V548M57.5 546V548M58.5 545V547M59.5 544V551M60.5 548V551M61.5 549V554M62.5 552V557M63.5 556V557M64.5 555V561M65.5 558V562M66.5 557V564M67.5 553V559M68.5 554V556M69.5 554V557M70.5 553V558M71.5 554V556M72.5 554V561M73.5 551V557M74.5 555V557M75.5 552V556M76.5 552V556M77.5 551V556M78.5 554V559M79.5 555V560M80.5 557V560M81.5 557V559M82.5 558V560M83.5 558V561M84.5 558V562M85.5 560V562M86.5 560V562M87.5 560V562M88.5 560V563M89.5 560V564M90.5 560V562M91.5 561V564M92.5 562V566M93.5 564V568M94.5 566V571M95.5 569V575M96.5 569V572M97.5 570V572M98.5 569V572M99.5 570V573M100.5 569V571M101.5 569V574M102.5 570V574M103.5 570V574M104.5 572V575M105.5 573V577M106.5 574V578M107.5 574V580M108.5 576V580M109.5 576V579M110.5 576V578M111.5 575V580M112.5 575V578M113.5 576V579M114.5 577V583M115.5 581V585M116.5 581V587M117.5 579V584M118.5 578V580M119.5 578V587M120.5 580V584M121.5 582V588M122.5 586V592M123.5 585V593M124.5 582V587M125.5 583V586M126.5 584V587M127.5 579V586M128.5 577V584M129.5 580V582M130.5 579V582M131.5 579V581M132.5 578V581M133.5 579V581M134.5 577V580M135.5 573V579M136.5 575V582M137.5 577V581M138.5 579V586M139.5 579V582M140.5 579V582M141.5 578V581M142.5 578V582M143.5 579V582M144.5 578V582M145.5 578V583M146.5 579V587M147.5 580V583M148.5 581V584M149.5 582V584M150.5 579V587M151.5 581V585M152.5 581V583M153.5 581V583M154.5 581V584M155.5 581V583M156.5 581V585M157.5 582V587M158.5 584V588M159.5 584V587M160.5 586V591M161.5 584V589M162.5 583V587M163.5 582V585M164.5 580V584M165.5 579V583M166.5 577V581M167.5 574V580M168.5 574V581M169.5 580V585M170.5 583V590M171.5 584V589M172.5 586V588M173.5 585V588M174.5 585V587M175.5 585V592M176.5 585V591M177.5 585V588M178.5 584V587M179.5 583V588M180.5 583V586M181.5 582V586M182.5 582V586M183.5 584V588M184.5 586V593M185.5 589V596M186.5 593V598M187.5 596V600M188.5 598V600M189.5 598V601M190.5 598V603M191.5 600V602M192.5 599V602M193.5 599V602M194.5 596V603M195.5 599V603M196.5 596V601M197.5 596V598M198.5 595V601M199.5 593V598M200.5 591V598M201.5 591V593M202.5 592V596M203.5 594V599M204.5 597V606M205.5 604V617M206.5 614V617M207.5 612V616M208.5 611V616M209.5 609V616M210.5 604V611M211.5 608V610M212.5 607V610M213.5 608V611M214.5 609V615M215.5 609V616M216.5 611V614M217.5 612V617M218.5 614V621M219.5 613V621M220.5 618V622M221.5 618V622M222.5 613V620M223.5 612V617M224.5 615V620M225.5 618V625M226.5 620V623M227.5 614V622M228.5 610V616M229.5 610V614M230.5 608V613M231.5 609V612M232.5 608V612M233.5 605V614M234.5 605V608M235.5 605V609M236.5 603V607M237.5 602V606M238.5 602V604M239.5 602V606M240.5 602V605M241.5 601V604M242.5 597V603M243.5 597V601M244.5 599V602M245.5 597V601M246.5 597V601M247.5 596V601M248.5 594V599M249.5 596V600M250.5 597V600M251.5 596V600M252.5 594V598M253.5 595V598M254.5 596V599M255.5 598V601M256.5 599V604M257.5 601V604M258.5 599V604M259.5 595V600M260.5 593V597M261.5 592V595M262.5 591V597M263.5 593V601M264.5 595V598M265.5 597V599M266.5 598V600M267.5 598V601M268.5 596V601M269.5 599V603M270.5 601V603M271.5 601V604M272.5 600V605M273.5 600V604M274.5 601V604M275.5 601V605M276.5 603V611M277.5 605V610M278.5 608V611M279.5 610V613M280.5 608V612M281.5 610V613M282.5 610V614M283.5 610V615M284.5 609V611M285.5 607V612M286.5 606V610M287.5 604V610M288.5 606V611M289.5 609V612M290.5 610V613M291.5 610V614M292.5 612V618M293.5 614V617M294.5 615V621M295.5 619V622M296.5 615V622M297.5 613V617M298.5 611V614M299.5 608V613M300.5 607V610M301.5 605V608M302.5 604V606M303.5 598V606M304.5 598V603M305.5 600V602M306.5 599V602M307.5 599V602M308.5 596V601M309.5 598V601M310.5 596V601M311.5 597V599M312.5 595V599M313.5 593V597M314.5 592V596M315.5 591V594M316.5 590V593M317.5 586V593M318.5 585V590M319.5 579V587M320.5 579V582M321.5 579V581M322.5 576V581M323.5 577V580M324.5 577V582M325.5 579V582M326.5 580V583M327.5 580V586M328.5 582V585M329.5 578V585M330.5 580V583M331.5 580V582M332.5 580V583M333.5 576V582M334.5 577V579M335.5 576V582M336.5 580V582M337.5 577V586M338.5 583V585M339.5 583V586M340.5 583V589M341.5 582V588M342.5 581V586M343.5 581V584M344.5 581V587M345.5 579V582M346.5 578V584M347.5 577V581M348.5 576V578M349.5 575V578M350.5 573V577M351.5 574V576M352.5 572V576M353.5 572V575M354.5 573V576M355.5 574V577M356.5 574V581M357.5 574V577M358.5 575V577M359.5 575V578M360.5 568V577M361.5 568V576M362.5 563V571M363.5 560V566M364.5 559V563M365.5 559V562M366.5 559V564M367.5 558V562M368.5 558V563M369.5 557V560M370.5 557V560M371.5 555V560M372.5 555V560M373.5 555V561M374.5 554V557M375.5 554V556M376.5 552V556M377.5 552V555M378.5 553V565M379.5 559V565M380.5 562V567M381.5 560V564M382.5 560V565M383.5 559V562M384.5 558V563M385.5 560V563M386.5 560V563M387.5 560V566M388.5 559V563M389.5 561V564M390.5 563V564M391.5 561V564M392.5 561V564M393.5 560V565M394.5 560V562M395.5 560V562M396.5 561V563M397.5 559V563M398.5 559V562M399.5 559V563M400.5 558V562M401.5 559V563M402.5 559V562M403.5 559V562M404.5 556V561M405.5 558V562M406.5 558V561M407.5 558V560M408.5 557V560M409.5 557V561M410.5 559V564M411.5 562V564M412.5 560V567M413.5 565V569M414.5 567V570M415.5 568V573M416.5 570V572M417.5 569V572M418.5 568V572M419.5 570V572M420.5 567V571M421.5 568V572M422.5 567V572M423.5 566V570M424.5 567V568M425.5 564V569M426.5 564V568M427.5 564V567M428.5 562V566M429.5 564V567M430.5 563V571M431.5 566V567M432.5 566V568M433.5 567V571M434.5 569V576M435.5 571V574M436.5 572V577M437.5 573V575M438.5 573V580M439.5 576V579M440.5 574V579M441.5 575V578M442.5 574V578M443.5 572V576M444.5 572V575M445.5 572V575M446.5 570V573M447.5 571V574M448.5 572V574M449.5 572V575M450.5 572V575M451.5 573V575M452.5 573V575M453.5 573V577M454.5 574V577M455.5 576V579M456.5 577V580M457.5 579V582M458.5 578V582M459.5 577V581M460.5 578V581M461.5 578V582M462.5 580V585M463.5 584V588M464.5 585V588M465.5 586V588M466.5 586V588M467.5 586V589M468.5 588V592M469.5 590V592M470.5 590V596M471.5 595V599M472.5 593V603M473.5 598V602M474.5 595V599M475.5 591V597M476.5 588V593M477.5 588V592M478.5 589V592M479.5 585V594M480.5 587V590M481.5 587V590M482.5 587V589M483.5 586V590M484.5 587V591M485.5 587V594M486.5 586V592M487.5 586V590M488.5 585V592M489.5 585V587M490.5 586V588M491.5 585V588M492.5 584V588M493.5 586V589M494.5 587V589M495.5 587V589M496.5 587V590M497.5 587V590M498.5 587V592M499.5 590V596M500.5 590V593M501.5 590V595M502.5 588V593M503.5 589V592M504.5 590V592M505.5 590V593M506.5 591V593M507.5 591V595M508.5 593V595M509.5 592V598M510.5 596V598M511.5 595V603M512.5 598V600M513.5 599V604M514.5 598V602M515.5 601V603M516.5 601V605M517.5 602V604M518.5 602V605M519.5 600V605M520.5 599V602M521.5 595V600M522.5 595V600M523.5 593V597M524.5 593V599M525.5 592V595M526.5 590V594M527.5 589V593M528.5 588V591M529.5 587V590M530.5 589V593M531.5 591V596M532.5 594V600M533.5 592V597M534.5 594V597M535.5 592V596M536.5 591V594M537.5 589V593M538.5 589V595M539.5 588V593M540.5 588V592M541.5 589V592M542.5 588V592M543.5 589V592M544.5 588V592M545.5 590V592M546.5 586V592M547.5 589V593M548.5 591V596M549.5 594V597M550.5 592V597M551.5 594V597M552.5 595V598M553.5 595V598M554.5 595V598M555.5 595V598M556.5 594V598M557.5 594V598M558.5 597V598M559.5 597V600M560.5 598V600M561.5 597V600M562.5 597V603M563.5 595V599M564.5 594V597M565.5 594V596M566.5 590V596M567.5 592V595M568.5 593V597M569.5 593V596M570.5 593V598M571.5 592V594M572.5 589V594M573.5 592V596M574.5 590V599M575.5 597V601M576.5 598V601M577.5 598V600M578.5 598V600M579.5 597V600M580.5 596V599M581.5 596V599M582.5 595V599M583.5 592V596M584.5 592V595M585.5 592V596M586.5 593V595M587.5 593V597M588.5 593V596M589.5 592V596M590.5 593V595M591.5 593V595M592.5 592V594M593.5 592V596M594.5 593V596M595.5 593V596M596.5 591V597M597.5 594V597M598.5 592V597M599.5 593V596M600.5 593V595M601.5 591V595M602.5 590V594M603.5 588V595M604.5 587V592M605.5 588V592M606.5 588V591M607.5 589V591M608.5 586V593M609.5 590V593M610.5 591V594M611.5 591V595M612.5 591V596M613.5 592V593M614.5 590V594M615.5 589V595M616.5 587V593M617.5 591V593M618.5 588V592M619.5 588V591M620.5 589V592M621.5 590V592M622.5 590V593M623.5 590V594M624.5 590V597M625.5 591V596M626.5 594V597M627.5 590V596M628.5 586V592M629.5 589V591M630.5 586V593M631.5 581V592M632.5 581V583M633.5 581V586M634.5 583V587M635.5 585V591M636.5 589V594M637.5 592V596M638.5 594V598M639.5 596V603M640.5 598V603M641.5 601V607M642.5 602V607M643.5 602V605M644.5 602V605M645.5 600V608M646.5 601V606M647.5 602V606M648.5 601V611M649.5 608V614M650.5 610V616M651.5 614V620M652.5 617V620M653.5 615V621M654.5 614V618M655.5 613V620M656.5 612V616M657.5 612V614M658.5 612V615M659.5 613V615M660.5 613V618M661.5 617V622M662.5 620V628M663.5 623V627M664.5 625V628M665.5 624V632M666.5 628V632M667.5 626V632M668.5 623V628M669.5 622V626M670.5 622V626M671.5 624V627M672.5 623V631M673.5 629V632M674.5 630V634M675.5 632V636M676.5 635V638M677.5 636V645M678.5 639V641M679.5 628V641M680.5 621V631M681.5 620V625M682.5 622V628M683.5 623V632M684.5 630V636M685.5 632V639M686.5 635V639M687.5 633V638M688.5 632V638M689.5 632V635M690.5 627V634M691.5 622V630M692.5 621V626M693.5 617V624M694.5 616V622M695.5 616V621M696.5 617V624M697.5 619V630M698.5 624V630M699.5 627V630M700.5 623V628M701.5 622V626M702.5 622V625M703.5 619V624M704.5 619V621M705.5 619V622M706.5 621V623M707.5 620V624M708.5 621V624M709.5 620V625M710.5 620V624M711.5 618V624M712.5 616V624M713.5 616V618M714.5 616V622M715.5 620V627M716.5 625V627M717.5 624V630M718.5 620V626M719.5 621V624M720.5 622V624M721.5 621V625M722.5 621V626M723.5 623V630M724.5 624V628M725.5 625V629M726.5 625V632M727.5 629V632M728.5 630V635M729.5 633V639M730.5 632V636M731.5 634V636M732.5 634V637M733.5 634V637M734.5 632V637M735.5 630V634M736.5 630V633M737.5 628V633M738.5 628V634M739.5 628V634M740.5 630V633M741.5 630V633M742.5 630V633M743.5 628V632M744.5 628V633M745.5 628V633M746.5 627V631M747.5 627V631M748.5 627V634M749.5 627V629M750.5 623V629M751.5 625V626M752.5 624V627M753.5 623V627M754.5 620V624M755.5 622V625M756.5 622V624M757.5 621V624M758.5 621V626M759.5 624V628M760.5 624V628M761.5 625V631M762.5 627V633M763.5 625V629M764.5 628V629M765.5 627V630M766.5 626V630M767.5 626V629M768.5 626V628M769.5 624V628M770.5 620V627M771.5 620V624M772.5 620V626M773.5 618V623M774.5 617V621M775.5 615V619M776.5 616V618M777.5 613V622M778.5 613V618M779.5 612V618M780.5 613V615M781.5 613V617M782.5 613V616M783.5 611V615M784.5 611V617M785.5 611V614M786.5 610V614M787.5 607V612M788.5 609V612M789.5 610V612M790.5 609V612M791.5 607V611M792.5 607V609M793.5 607V609M794.5 603V610M795.5 606V609M796.5 604V608M797.5 602V606M798.5 604V608M799.5 605V608M800.5 606V610M801.5 605V609M802.5 607V609M803.5 607V612M804.5 610V612M805.5 609V612M806.5 610V613M807.5 610V616M808.5 610V614M809.5 611V615M810.5 610V614M811.5 607V614M812.5 610V612M813.5 608V611M814.5 608V611M815.5 609V611M816.5 609V614M817.5 611V615M818.5 610V615M819.5 613V616M820.5 612V618M821.5 610V615M822.5 607V611M823.5 604V609M824.5 603V606M825.5 600V604M826.5 600V603M827.5 601V605M828.5 602V605M829.5 602V606M830.5 604V606M831.5 601V612M832.5 606V611M833.5 608V613M834.5 610V614M835.5 611V614M836.5 611V615M837.5 611V615M838.5 611V613M839.5 611V615M840.5 612V614M841.5 611V615M842.5 611V615M843.5 611V619M844.5 617V623M845.5 620V628M846.5 624V638M847.5 632V634M848.5 628V634M849.5 623V632M850.5 622V626M851.5 619V624M852.5 614V620M853.5 614V616M854.5 613V618M855.5 616V623M856.5 618V624M857.5 619V622M858.5 620V626M859.5 622V629M860.5 623V629M861.5 624V630M862.5 621V626M863.5 619V623M864.5 617V622M865.5 617V623M866.5 617V620M867.5 617V620M868.5 616V620M869.5 617V619M870.5 616V618M871.5 615V618M872.5 614V619M873.5 617V620M874.5 617V620M875.5 617V620M876.5 615V620M877.5 612V617M878.5 610V617M879.5 609V615M880.5 605V611M881.5 603V607M882.5 600V605M883.5 598V602M884.5 595V600M885.5 591V597M886.5 588V594M887.5 588V592M888.5 585V591M889.5 583V587M890.5 584V588M891.5 585V589M892.5 586V590M893.5 588V592M894.5 588V594M895.5 593V597M896.5 592V595M897.5 593V599M898.5 595V600M899.5 595V598M900.5 596V600M901.5 598V599M902.5 595V600M903.5 593V597M904.5 591V595M905.5 592V594M906.5 590V594M907.5 590V593M908.5 591V593M909.5 591V594M910.5 591V595M911.5 589V595M912.5 590V592M913.5 588V591M914.5 587V590M915.5 586V590M916.5 583V587M917.5 584V586M918.5 584V588M919.5 580V586M920.5 581V586M921.5 584V587M922.5 585V588M923.5 587V590M924.5 586V592M925.5 589V592M926.5 589V595M927.5 591V595M928.5 592V598M929.5 593V596M930.5 592V597M931.5 589V597M932.5 588V591M933.5 585V591M934.5 582V587M935.5 580V585M936.5 575V582M937.5 571V577M938.5 568V573M939.5 566V571M940.5 564V569M941.5 562V566M942.5 564V567M943.5 566V570M944.5 568V573M945.5 571V576M946.5 569V576M947.5 566V573M948.5 561V568M949.5 561V567M950.5 560V564M951.5 561V565M952.5 559V563M953.5 559V562M954.5 558V562M955.5 556V561M956.5 558V560M957.5 557V559M958.5 557V561M959.5 559V561M960.5 559V563M961.5 560V563M962.5 561V563M963.5 560V563M964.5 557V563M965.5 557V560M966.5 554V559M967.5 554V556M968.5 553V557M969.5 553V556M970.5 553V557M971.5 555V561M972.5 559V563M973.5 561V565M974.5 562V567M975.5 557V564M976.5 557V560M977.5 556V562M978.5 557V559M979.5 557V561M980.5 558V563M981.5 561V564M982.5 561V566M983.5 563V566M984.5 561V568M985.5 561V564M986.5 561V564M987.5 560V563M988.5 557V562M989.5 559V565M990.5 559V561M991.5 558V564M992.5 558V563M993.5 559V562M994.5 559V562M995.5 559V562M996.5 559V567M997.5 564V571M998.5 567V576M999.5 569V572M1000.5 568V571M1001.5 566V570M1002.5 566V568M1003.5 564V568M1004.5 564V568M1005.5 563V567M1006.5 562V565M1007.5 562V564M1008.5 558V566M1009.5 559V561M1010.5 558V562M1011.5 556V561M1012.5 555V561M1013.5 553V558M1014.5 552V556M1015.5 553V556M1016.5 553V557M1017.5 551V554M1018.5 550V553M1019.5 550V552M1020.5 548V551M1021.5 547V550M1022.5 547V551M1023.5 549V556M1024.5 550V552M1025.5 548V555M1026.5 551V555M1027.5 552V559M1028.5 554V558M1029.5 556V558M1030.5 554V558M1031.5 554V557M1032.5 553V556M1033.5 553V555M1034.5 551V555M1035.5 549V554M1036.5 550V553M1037.5 551V556M1038.5 554V561M1039.5 557V559M1040.5 557V562M1041.5 559V560M1042.5 553V561M1043.5 556V560M1044.5 555V560M1045.5 554V557M1046.5 554V558M1047.5 554V557M1048.5 553V557M1049.5 554V557M1050.5 555V558M1051.5 555V557M1052.5 555V559M1053.5 557V559M1054.5 557V559M1055.5 556V559M1056.5 548V558M1057.5 542V551M1058.5 535V545M1059.5 529V537M1060.5 519V531M1061.5 506V521M1062.5 506V509M1063.5 506V520M1064.5 517V523M1065.5 521V526M1066.5 523V530M1067.5 527V532M1068.5 527V535M1069.5 533V539M1070.5 532V538M1071.5 529V535M1072.5 526V530M1073.5 523V527M1074.5 520V525M1075.5 517V521M1076.5 515V519M1077.5 511V519M1078.5 509V513M1079.5 508V514M1080.5 512V515M1081.5 513V516M1082.5 514V518M1083.5 517V519M1084.5 518V523M1085.5 521V524M1086.5 521V524M1087.5 518V526M1088.5 516V520M1089.5 514V519M1090.5 511V516M1091.5 510V514M1092.5 511V514M1093.5 509V512M1094.5 510V513M1095.5 508V514M1096.5 508V511M1097.5 506V510M1098.5 508V510M1099.5 508V513M1100.5 509V512M1101.5 510V515M1102.5 511V515M1103.5 513V516M1104.5 511V521M1105.5 516V519M1106.5 517V523M1107.5 521V525M1108.5 523V526M1109.5 523V531M1110.5 526V531M1111.5 526V532M1112.5 525V529M1113.5 522V527M1114.5 522V527M1115.5 522V527M1116.5 524V526M1117.5 524V528M1118.5 526V532M1119.5 523V528M1120.5 522V526M1121.5 519V528M1122.5 519V522M1123.5 519V522M1124.5 519V523M1125.5 520V523M1126.5 519V526M1127.5 520V524M1128.5 519V524M1129.5 519V522M1130.5 520V523M1131.5 517V524M1132.5 520V526M1133.5 520V524M1134.5 520V524M1135.5 520V524M1136.5 520V523M1137.5 520V522M1138.5 519V525M1139.5 520V523M1140.5 520V523M1141.5 521V523M1142.5 519V523M1143.5 516V520M1144.5 514V518M1145.5 513V516M1146.5 513V518M1147.5 516V521M1148.5 519V527M1149.5 521V525M1150.5 523V524M1151.5 523V525M1152.5 523V525M1153.5 523V528M1154.5 525V528M1155.5 525V528M1156.5 525V528M1157.5 524V527M1158.5 524V526M1159.5 524V528M1160.5 523V528M1161.5 523V527M1162.5 524V526M1163.5 525V527M1164.5 525V527M1165.5 522V526M1166.5 523V526M1167.5 524V526M1168.5 522V529M1169.5 523V527M1170.5 522V525M1171.5 522V525M1172.5 523V528M1173.5 526V533M1174.5 530V536M1175.5 533V539M1176.5 532V540M1177.5 535V539M1178.5 533V537M1179.5 531V536M1180.5 531V533M1181.5 531V535M1182.5 531V534M1183.5 531V533M1184.5 530V532M1185.5 530V535M1186.5 529V532M1187.5 528V531M1188.5 528V531M1189.5 528V531M1190.5 527V532M1191.5 526V535M1192.5 529V534M1193.5 532V539M1194.5 535V541M1195.5 539V551M1196.5 547V552M1197.5 543V548M1198.5 543V548M1199.5 546V553M1200.5 552V556M1201.5 554V557M1202.5 554V557M1203.5 555V557M1204.5 556V558M1205.5 557V559M1206.5 555V562M1207.5 560V563M1208.5 560V567M1209.5 566V571M1210.5 568V576M1211.5 574V583M1212.5 581V585M1213.5 584V589M1214.5 584V587M1215.5 580V587M1216.5 574V581M1217.5 573V576M1218.5 573V575M1219.5 571V575M1220.5 569V573M1221.5 568V572M1222.5 567V571M1223.5 565V569M1224.5 563V570M1225.5 562V566M1226.5 540V568M1227.5 540V543M1228.5 540V549M1229.5 542V551M1230.5 538V544M1231.5 537V541M1232.5 532V542M1233.5 526V534M1234.5 525V532M1235.5 530V536M1236.5 533V536M1237.5 534V537M1238.5 534V537M1239.5 534V538M1240.5 534V536M1241.5 535V544M1242.5 542V546M1243.5 544V546M1244.5 543V546M1245.5 543V547M1246.5 542V547M1247.5 542V547M1248.5 542V546M1249.5 541V546M1250.5 540V544M1251.5 537V543M1252.5 535V540M1253.5 532V537M1254.5 531V535M1255.5 529V533M1256.5 529V532M1257.5 529V531M1258.5 527V530M1259.5 525V529M1260.5 524V530M1261.5 524V528M1262.5 523V526M1263.5 521V525M1264.5 521V527M1265.5 521V522M1266.5 520V525M1267.5 523V530M1268.5 527V532M1269.5 529V531M1270.5 527V531M1271.5 526V530M1272.5 525V529M1273.5 526V527M1274.5 525V528M1275.5 524V531M1276.5 524V526M1277.5 518V527M1278.5 517V523M1279.5 518V523M1280.5 517V520M1281.5 518V526M1282.5 519V524M1283.5 520V525" stroke="#00ff00" stroke-width="1" shape-rendering="crispEdges"/>
</svg>
<div class="cax" style="left:31.2px;top:495px;letter-spacing:-0.04px;white-space:pre">BTCUSD, M1:  Bitcoin  117941.21 117952.93 117936.86 117943.02</div>
<div class="cax" style="left:10.5px;top:510px;letter-spacing:-0.014px;width:1100px;overflow:hidden">SMILEY FACE [Lots=0.01; RiskPercentage=12.3; OrderDistPoints=25; TpPoints=15000; SlPoints=15000; TslPoints=80; TslTriggerPoints=150; Timeframe=1; SMILE=2; ExpirationMinutes=1; Magic=2025123; CloseTimeHour=23; CloseTimeMin=55; CloseTimeSec=0]</div>
<svg class="abs" style="left:0;top:486px" width="1366" height="181" viewBox="0 486 1366 181" fill="none">
 <defs><g id="ra" shape-rendering="crispEdges"><path d="M2 0h5v2h2v2h-1v1h-1v1h-1v1h-1v1h-1v-1h-1v-1h-1v-1h-1v-1h-1v-2h2z" fill="#fff"/><path d="M3 1h3v2h2v1h-1v1h-1v1h-1v1h-1v-1h-1v-1h-1v-1h-1v-1h2z" fill="#e8481f"/></g><g id="ba" shape-rendering="crispEdges"><path d="M2 8h5v-2h2v-2h-1v-1h-1v-1h-1v-1h-1v-1h-1v1h-1v1h-1v1h-1v1h-1v2h2z" fill="#fff"/><path d="M3 7h3v-2h2v-1h-1v-1h-1v-1h-1v-1h-1v1h-1v1h-1v1h-1v1h2z" fill="#1465c0"/></g></defs>
 <use href="#ba" x="4" y="543"/><use href="#ra" x="4" y="531"/><use href="#ba" x="10" y="540"/><use href="#ra" x="12" y="544"/><use href="#ba" x="15" y="540"/><use href="#ba" x="24" y="543"/><use href="#ra" x="26" y="532"/><use href="#ba" x="47" y="544"/><use href="#ra" x="60" y="548"/><use href="#ba" x="124" y="577"/><use href="#ra" x="132" y="567"/><use href="#ba" x="146" y="578"/><use href="#ra" x="161" y="566"/><use href="#ba" x="173" y="586"/><use href="#ra" x="173" y="576"/><use href="#ba" x="227" y="607"/><use href="#ra" x="227" y="595"/><use href="#ba" x="232" y="604"/><use href="#ra" x="233" y="593"/><use href="#ba" x="237" y="602"/><use href="#ra" x="237" y="590"/><use href="#ba" x="241" y="599"/><use href="#ra" x="242" y="590"/><use href="#ba" x="254" y="596"/><use href="#ra" x="254" y="583"/><use href="#ba" x="284" y="606"/><use href="#ba" x="294" y="609"/><use href="#ra" x="294" y="599"/><use href="#ba" x="329" y="580"/><use href="#ra" x="329" y="568"/><use href="#ba" x="364" y="558"/><use href="#ra" x="367" y="547"/><use href="#ba" x="372" y="556"/><use href="#ra" x="373" y="545"/><use href="#ba" x="389" y="562"/><use href="#ra" x="390" y="552"/><use href="#ba" x="399" y="558"/><use href="#ra" x="402" y="548"/><use href="#ba" x="480" y="588"/><use href="#ra" x="482" y="576"/><use href="#ba" x="488" y="586"/><use href="#ra" x="507" y="590"/><use href="#ba" x="518" y="593"/><use href="#ra" x="519" y="582"/><use href="#ba" x="522" y="589"/><use href="#ra" x="523" y="580"/><use href="#ba" x="529" y="587"/><use href="#ra" x="547" y="590"/><use href="#ba" x="551" y="596"/><use href="#ra" x="552" y="585"/><use href="#ba" x="558" y="595"/><use href="#ra" x="558" y="585"/><use href="#ba" x="583" y="592"/><use href="#ra" x="589" y="582"/><use href="#ba" x="595" y="592"/><use href="#ra" x="596" y="581"/><use href="#ba" x="610" y="590"/><use href="#ra" x="615" y="580"/><use href="#ba" x="626" y="591"/><use href="#ra" x="626" y="575"/><use href="#ba" x="675" y="623"/><use href="#ra" x="675" y="607"/><use href="#ba" x="687" y="620"/><use href="#ra" x="688" y="607"/><use href="#ba" x="730" y="634"/><use href="#ra" x="730" y="623"/><use href="#ba" x="735" y="628"/><use href="#ra" x="745" y="618"/><use href="#ba" x="753" y="625"/><use href="#ra" x="753" y="612"/><use href="#ba" x="763" y="622"/><use href="#ra" x="764" y="612"/><use href="#ba" x="771" y="615"/><use href="#ra" x="774" y="604"/><use href="#ba" x="778" y="613"/><use href="#ra" x="778" y="603"/><use href="#ba" x="782" y="613"/><use href="#ra" x="782" y="600"/><use href="#ba" x="788" y="609"/><use href="#ra" x="788" y="595"/><use href="#ba" x="792" y="605"/><use href="#ra" x="820" y="592"/><use href="#ba" x="872" y="617"/><use href="#ra" x="872" y="605"/><use href="#ba" x="906" y="591"/><use href="#ra" x="906" y="580"/><use href="#ba" x="909" y="587"/><use href="#ra" x="909" y="577"/><use href="#ba" x="914" y="584"/><use href="#ra" x="914" y="574"/><use href="#ba" x="937" y="566"/><use href="#ra" x="937" y="555"/><use href="#ba" x="947" y="557"/><use href="#ra" x="947" y="546"/><use href="#ba" x="954" y="558"/><use href="#ra" x="955" y="547"/><use href="#ba" x="959" y="555"/><use href="#ra" x="965" y="544"/><use href="#ba" x="973" y="553"/><use href="#ra" x="973" y="539"/><use href="#ba" x="988" y="559"/><use href="#ra" x="991" y="550"/><use href="#ba" x="1004" y="565"/><use href="#ra" x="1004" y="553"/><use href="#ba" x="1005" y="559"/><use href="#ra" x="1005" y="544"/><use href="#ba" x="1013" y="555"/><use href="#ra" x="1014" y="544"/><use href="#ba" x="1023" y="547"/><use href="#ra" x="1035" y="550"/><use href="#ba" x="1071" y="514"/><use href="#ra" x="1071" y="503"/><use href="#ba" x="1084" y="513"/><use href="#ra" x="1084" y="499"/><use href="#ba" x="1092" y="508"/><use href="#ra" x="1094" y="499"/><use href="#ba" x="1100" y="511"/><use href="#ra" x="1105" y="515"/><use href="#ba" x="1111" y="524"/><use href="#ra" x="1111" y="515"/><use href="#ba" x="1118" y="512"/><use href="#ra" x="1148" y="516"/><use href="#ba" x="1157" y="518"/><use href="#ra" x="1157" y="508"/><use href="#ba" x="1184" y="529"/><use href="#ra" x="1186" y="518"/><use href="#ba" x="1213" y="572"/><use href="#ra" x="1213" y="562"/><use href="#ba" x="1221" y="566"/><use href="#ra" x="1221" y="552"/><use href="#ba" x="1227" y="534"/><use href="#ra" x="1229" y="516"/><use href="#ba" x="1249" y="534"/><use href="#ra" x="1249" y="520"/><use href="#ba" x="1255" y="527"/><use href="#ra" x="1257" y="516"/>
 <path d="M6.500 489.500H1284.500V646.500H6.500Z" stroke="#fff" stroke-width="1"/>
 <path d="M6.5 646V650M70.5 646V650M134.5 646V650M198.5 646V650M262.5 646V650M326.5 646V650M390.5 646V650M454.5 646V650M518.5 646V650M582.5 646V650M646.5 646V650M710.5 646V650M774.5 646V650M838.5 646V650M902.5 646V650M966.5 646V650M1030.5 646V650M1094.5 646V650M1158.5 646V650M1222.5 646V650M1285 518.5H1289M1285 550.5H1289M1285 582.5H1289M1285 614.5H1289" stroke="#fff" stroke-width="1"/>
 <g shape-rendering="crispEdges"><rect x="11" y="495" width="8" height="11" fill="#e03c28"/><rect x="12" y="496" width="6" height="9" fill="#fff"/><rect x="13" y="497" width="5" height="2" fill="#e03c28"/><rect x="13" y="500" width="5" height="2" fill="#ffc8be"/><rect x="13" y="503" width="5" height="1" fill="#ffc8be"/>
 <rect x="18" y="495" width="8" height="11" fill="#0a64b4"/><rect x="19" y="496" width="6" height="9" fill="#fff"/><rect x="19" y="497" width="5" height="2" fill="#0a64b4"/><rect x="19" y="500" width="5" height="2" fill="#b4e0ff"/><rect x="19" y="503" width="5" height="1" fill="#b4e0ff"/></g>
</svg>

<div class="cax" style="left:1290.3px;top:513.1px;letter-spacing:-0.37px;">105197.1</div><div class="cax" style="left:1290.3px;top:545.1px;letter-spacing:-0.37px;">104824.0</div><div class="cax" style="left:1290.3px;top:577.1px;letter-spacing:-0.37px;">104450.2</div><div class="cax" style="left:1290.3px;top:609.1px;letter-spacing:-0.37px;">104076.4</div><div class="cax" style="left:6.2px;top:650px;letter-spacing:-0.30px;">1 Jun 2025</div><div class="cax" style="left:70.2px;top:650px;letter-spacing:-0.20px;">1 Jun 01:39</div><div class="cax" style="left:134.2px;top:650px;letter-spacing:-0.20px;">1 Jun 03:43</div><div class="cax" style="left:198.2px;top:650px;letter-spacing:-0.20px;">1 Jun 04:47</div><div class="cax" style="left:262.2px;top:650px;letter-spacing:-0.20px;">1 Jun 05:51</div><div class="cax" style="left:326.2px;top:650px;letter-spacing:-0.20px;">1 Jun 06:55</div><div class="cax" style="left:390.2px;top:650px;letter-spacing:-0.20px;">1 Jun 07:59</div><div class="cax" style="left:454.2px;top:650px;letter-spacing:-0.20px;">1 Jun 09:03</div><div class="cax" style="left:518.2px;top:650px;letter-spacing:-0.20px;">1 Jun 10:07</div><div class="cax" style="left:582.2px;top:650px;letter-spacing:-0.06px;">1 Jun 11:11</div><div class="cax" style="left:646.2px;top:650px;letter-spacing:-0.20px;">1 Jun 12:15</div><div class="cax" style="left:710.2px;top:650px;letter-spacing:-0.20px;">1 Jun 13:19</div><div class="cax" style="left:774.2px;top:650px;letter-spacing:-0.20px;">1 Jun 14:23</div><div class="cax" style="left:838.2px;top:650px;letter-spacing:-0.20px;">1 Jun 15:27</div><div class="cax" style="left:902.2px;top:650px;letter-spacing:-0.20px;">1 Jun 16:31</div><div class="cax" style="left:966.2px;top:650px;letter-spacing:-0.20px;">1 Jun 17:35</div><div class="cax" style="left:1030.2px;top:650px;letter-spacing:-0.20px;">1 Jun 18:39</div><div class="cax" style="left:1094.2px;top:650px;letter-spacing:-0.20px;">1 Jun 19:43</div><div class="cax" style="left:1158.2px;top:650px;letter-spacing:-0.20px;">1 Jun 20:47</div><div class="cax" style="left:1222.2px;top:650px;letter-spacing:-0.20px;">1 Jun 21:51</div>
<div class="abs" style="left:1324px;top:486px;width:34px;height:204px;background:#f0f0f0;overflow:hidden">
 <div style="position:absolute;left:3px;top:3px;width:30px;height:2px;background-image:repeating-linear-gradient(90deg,#c4c4c4 0 2px,transparent 2px 4px)"></div>
 <div style="position:absolute;left:3px;top:9px;width:30px;height:26px;background:#cce4f7;border:1px solid #99c9ef;border-radius:4px"></div>
</div>
<div class="tf" style="top:501px">M1</div><div class="tf" style="top:530px">M5</div><div class="tf" style="top:559px">M15</div><div class="tf" style="top:588px">M30</div><div class="tf" style="top:617px">H1</div><div class="tf" style="top:646px">H4</div><div class="tf" style="top:675px">D1</div>


<div class="abs" style="left:2px;top:667px;width:1322px;height:23px;background:#f0f0f0;border-top:1px solid #fff"></div>
<div class="abs" style="left:4px;top:668px;width:1px;height:21px;background:#a0a0a0"></div>
<div class="abs" style="left:16.1px;top:673px;font-size:12px;letter-spacing:-0.78px;color:#8c8c8c;white-space:nowrap;">USTEC,M1</div><div class="abs" style="left:93.6px;top:673px;font-size:12px;letter-spacing:-0.60px;color:#8c8c8c;white-space:nowrap;">XAUUSD,M1</div><div class="abs" style="left:182.1px;top:673px;font-size:12px;letter-spacing:-0.98px;color:#8c8c8c;white-space:nowrap;">BTCUSD,M1</div><div class="abs" style="left:267.0px;top:673px;font-size:12px;letter-spacing:-0.88px;color:#8c8c8c;white-space:nowrap;">XRPUSD,H1</div><div class="abs" style="left:352.2px;top:673px;font-size:12px;letter-spacing:-0.82px;color:#8c8c8c;white-space:nowrap;">ETHUSD,H1</div><div class="abs" style="left:437.0px;top:673px;font-size:12px;letter-spacing:-0.96px;color:#8c8c8c;white-space:nowrap;">BTCUSD,M1</div><div class="abs" style="left:522.3px;top:673px;font-size:12px;letter-spacing:-0.59px;color:#8c8c8c;white-space:nowrap;">XAUUSD,M1</div><div class="abs" style="left:611.3px;top:673px;font-size:12px;letter-spacing:-1.00px;color:#8c8c8c;white-space:nowrap;">BTCUSD,M1</div><div class="abs" style="left:697.0px;top:673px;font-size:12px;letter-spacing:-1.09px;color:#8c8c8c;white-space:nowrap;">BTCUSD,M1</div><div class="abs" style="left:782.0px;top:673px;font-size:12px;letter-spacing:-0.91px;color:#8c8c8c;white-space:nowrap;">USTEC,M1</div><div class="abs" style="left:858.3px;top:673px;font-size:12px;letter-spacing:-0.91px;color:#8c8c8c;white-space:nowrap;">USTEC,M1</div><div class="abs" style="left:935.3px;top:673px;font-size:12px;letter-spacing:-0.82px;color:#8c8c8c;white-space:nowrap;">USTEC,M1</div><div class="abs" style="left:1012.8px;top:673px;font-size:12px;letter-spacing:-0.91px;color:#8c8c8c;white-space:nowrap;">USTEC,M1</div><div class="abs" style="left:1090.0px;top:673px;font-size:12px;letter-spacing:-0.77px;color:#8c8c8c;white-space:nowrap;">BRENT,H1</div><div class="abs" style="left:1166.8px;top:673px;font-size:12px;letter-spacing:-1.06px;color:#8c8c8c;white-space:nowrap;">BTCUSD,M1</div><div class="abs" style="left:1251.3px;top:673px;font-size:12px;letter-spacing:-1.00px;color:#8c8c8c;white-space:nowrap;width:25px;overflow:hidden">BTCUSD,M1</div><div class="csep" style="left:82px"></div><div class="csep" style="left:171px"></div><div class="csep" style="left:256px"></div><div class="csep" style="left:341px"></div><div class="csep" style="left:426px"></div><div class="csep" style="left:511px"></div><div class="csep" style="left:601px"></div><div class="csep" style="left:686px"></div><div class="csep" style="left:770px"></div><div class="csep" style="left:847px"></div><div class="csep" style="left:924px"></div><div class="csep" style="left:1001px"></div><div class="csep" style="left:1078px"></div><div class="csep" style="left:1155px"></div><div class="csep" style="left:1240px"></div>
<div class="abs" style="left:1288px;top:676px;width:0;height:0;border-top:3.500px solid transparent;border-bottom:3.500px solid transparent;border-right:4px solid #c0c0c0"></div>
<div class="abs" style="left:1309px;top:676px;width:0;height:0;border-top:3.500px solid transparent;border-bottom:3.500px solid transparent;border-left:4px solid #000"></div>


<div class="abs" style="left:2px;top:690px;width:1356px;height:22px;background:#f0f0f0;border-top:1px solid #d8d8d8;border-radius:0 0 7px 7px"></div>
<div class="abs" style="left:4.0px;top:695px;font-size:12px;letter-spacing:-0.36px;color:#111;white-space:nowrap;">For Help, press F1</div>
<div class="abs" style="left:670.3px;top:695px;font-size:12px;letter-spacing:0.22px;color:#111;white-space:nowrap;">Default</div>
<div class="abs" style="left:665px;top:692px;width:1px;height:17px;background:#b4b4b4"></div><div class="abs" style="left:794px;top:692px;width:1px;height:17px;background:#b4b4b4"></div><div class="abs" style="left:891px;top:692px;width:1px;height:17px;background:#b4b4b4"></div><div class="abs" style="left:962px;top:692px;width:1px;height:17px;background:#b4b4b4"></div><div class="abs" style="left:1033px;top:692px;width:1px;height:17px;background:#b4b4b4"></div><div class="abs" style="left:1101px;top:692px;width:1px;height:17px;background:#b4b4b4"></div><div class="abs" style="left:1171px;top:692px;width:1px;height:17px;background:#b4b4b4"></div><div class="abs" style="left:1237px;top:692px;width:1px;height:17px;background:#b4b4b4"></div>
<svg class="abs" style="left:1244px;top:695px" width="13" height="13" viewBox="0 0 13 13" fill="none"><circle cx="6.500" cy="6.500" r="5" stroke="#c8d8ec" stroke-width="1.300"/><path d="M6.500 1.500A5 5 0 0 0 1.500 6.500" stroke="#4a90d9" stroke-width="1.300"/></svg>
<div class="abs" style="left:1262.3px;top:695px;font-size:12px;letter-spacing:-0.02px;color:#111;white-space:nowrap;">71.4 / 0.1 Mb</div>
<div class="abs" style="left:1344px;top:699px;width:10px;height:10px;background-image:radial-gradient(#b0b0b0 0.8px,transparent 1px);background-size:3px 3px;clip-path:polygon(100% 0,100% 100%,0 100%)"></div>

<div class="abs" style="left:5px;top:712px;width:50px;height:2px;border:1px solid #a8a8a8;border-top:none"></div>
<div class="abs" style="left:110px;top:712px;width:1px;height:2px;background:#b0b0b0"></div><div class="abs" style="left:204px;top:712px;width:1px;height:2px;background:#b0b0b0"></div><div class="abs" style="left:284px;top:712px;width:1px;height:2px;background:#b0b0b0"></div><div class="abs" style="left:359px;top:712px;width:1px;height:2px;background:#b0b0b0"></div><div class="abs" style="left:457px;top:712px;width:1px;height:2px;background:#b0b0b0"></div>
<div id="taskbar"><div class="abs" style="left:3px;top:5px;width:38px;height:38px;background:#eff0ec;border-radius:5px"></div>
<div class="abs" style="left:645px;top:5px;width:38px;height:38px;background:#f1f2ef;border-radius:5px;box-shadow:0 0 0 1px #e6e7e2"></div>
<div class="abs" style="left:333px;top:8.5px;width:218.500px;height:31px;background:#f6f7f3;border:1px solid #dcdfd2;border-radius:15.500px"></div>
<div class="abs" style="left:368.7px;top:16px;font-size:14px;color:#5c5c5c;letter-spacing:-0.56px">Search</div>
<svg class="abs" style="left:0;top:0" width="1366" height="48" viewBox="0 720 1366 48" fill="none">
 <defs>
  <linearGradient id="wg" x1="0" y1="0" x2="1" y2="1"><stop offset="0" stop-color="#55c8fa"/><stop offset="1" stop-color="#0a6cd4"/></linearGradient>
  <linearGradient id="pf" x1="0" y1="0" x2="1" y2="1"><stop offset="0" stop-color="#9a3df0"/><stop offset="1" stop-color="#4a18a0"/></linearGradient>
  <linearGradient id="eg" x1="0" y1="0" x2="1" y2="1"><stop offset="0" stop-color="#2a9ee8"/><stop offset="1" stop-color="#0a64c0"/></linearGradient><linearGradient id="eg2" x1="0" y1="0" x2="1" y2=".4"><stop offset="0" stop-color="#2aa8f4"/><stop offset=".5" stop-color="#35c4d0"/><stop offset="1" stop-color="#5fe25a"/></linearGradient>
 <linearGradient id="rdg" x1="0" y1="0" x2="1" y2=".3"><stop offset="0" stop-color="#0a14c4"/><stop offset=".45" stop-color="#1a3ee0"/><stop offset=".55" stop-color="#6a94f4"/><stop offset="1" stop-color="#a8c4fc"/></linearGradient></defs>
 <!-- widgets -->
 <rect x="10" y="733" width="24" height="22" rx="1.500" fill="#0a5fb4"/>
 <rect x="12" y="735" width="9.500" height="18" rx="1" fill="#f4f6f8"/>
 <rect x="23" y="735" width="9.500" height="10" fill="#62d2ff"/><rect x="23" y="745" width="9.500" height="4" fill="#1e9ff2"/><rect x="23" y="749" width="9.500" height="4" fill="#0a84e4"/>
 <!-- windows logo -->
 <rect x="296" y="733" width="11" height="11" rx="1" fill="url(#wg)"/><rect x="308" y="733" width="11" height="11" rx="1" fill="#1a8fe8"/><rect x="296" y="745" width="11" height="11" rx="1" fill="#1a8fe8"/><rect x="308" y="745" width="11" height="11" rx="1" fill="#0a6cd4"/>
 <!-- search glass -->
 <circle cx="349.500" cy="742.500" r="5" stroke="#333" stroke-width="1.600"/><path d="M353.300 746.500L357 750.500" stroke="#333" stroke-width="1.800" stroke-linecap="round"/>
 <!-- task view -->
 <rect x="570" y="733" width="17.500" height="15" rx="2" fill="#eeeeee" stroke="#d8d8d8" stroke-width=".6"/>
 <rect x="564" y="739" width="17.500" height="16" rx="2" fill="#2a2a2a"/>
 <rect x="570" y="739" width="11.500" height="9" fill="#bdbdbd"/>
 <!-- teams chat -->
 <circle cx="620" cy="743.500" r="11.500" fill="#7b83eb"/><path d="M609.500 749L609 755.500L615 752.500Z" fill="#7b83eb"/>
 <rect x="613.500" y="739.500" width="9" height="8" rx="1.500" fill="#fff"/><path d="M623.500 742.500L627 740.500V746.500L623.500 744.500Z" fill="#fff"/>
 <!-- mt5 -->
 <rect x="652" y="732" width="24" height="24" fill="#d90012"/>
 <path d="M664 734.800L672.200 739.500V748.800L664 753.400L655.800 748.800V739.500Z" fill="#fff"/><circle cx="664" cy="744.200" r="4.600" fill="#d90012"/><path d="M656 748L672 740" stroke="#d90012" stroke-width="1.800"/>
 <rect x="656" y="760" width="16" height="3" rx="1.500" fill="#0a6cd4"/>
 <!-- folder -->
 <path d="M696 735.500A1.500 1.500 0 0 1 697.500 734H704L706 736.500H696Z" fill="#e8a400"/>
 <rect x="696" y="736" width="24" height="18.500" rx="1.500" fill="#fcc93a"/>
 <path d="M696 746H720V753A1.500 1.500 0 0 1 718.500 754.500H697.500A1.500 1.500 0 0 1 696 753Z" fill="#f8b820"/>
 <path d="M700.500 754.500V750.500A2 2 0 0 1 702.500 748.500H713.500A2 2 0 0 1 715.500 750.500V754.500Z" fill="#1a86d8"/><rect x="703.500" y="752" width="9" height="1.300" fill="#0a5fa8"/>
 <rect x="704.500" y="760" width="7" height="2.500" rx="1.200" fill="#8a8a8a"/>
 <!-- edge -->
 <circle cx="752" cy="744" r="12" fill="url(#eg2)"/>
 <path d="M740.200 741.500C743 738 749.500 737.500 753 741.500C750 741.500 747.500 744 748 748C748.800 753 755 755 761 752.500A12 12 0 0 1 740.200 741.500Z" fill="url(#eg)"/>
 <path d="M748 746.500C747.500 751 751 755.500 757 755.800A12 12 0 0 0 762.500 749.800C758.500 752 753.500 751.500 752 748C751 746 749.500 745.500 748 746.500Z" fill="#0c4c9c"/>
 <path d="M750 744.800A2.800 2.800 0 0 1 755.300 743.500C755.500 745 754.300 746 755 747.300C752.500 748 750.300 747 750 744.800Z" fill="#e2e1e4"/>
 <!-- chrome -->
 <circle cx="796" cy="744" r="12" fill="#fbc116"/>
 <path d="M796 744L785.600 738A12 12 0 0 1 806.400 738Z" fill="#e33b2e"/>
 <path d="M796 732A12 12 0 0 1 806.400 738H796Z" fill="#e33b2e"/>
 <path d="M785.600 738A12 12 0 0 0 796 756L801.500 746L796 744Z" fill="#2da94f"/>
 <circle cx="796" cy="744" r="5.600" fill="#fff"/><circle cx="796" cy="744" r="4.400" fill="#3f7ee8"/>
 <!-- FBS -->
 <rect x="828" y="732" width="24" height="24" rx="3" fill="#107a3c"/>
 <path d="M836 748L852 756V753A3 3 0 0 1 849 756H840Z" fill="#0a6430" opacity=".7"/>
 <text x="840" y="748.500" font-family="Liberation Sans" font-weight="bold" font-size="10.500" fill="#fff" text-anchor="middle" textLength="18" lengthAdjust="spacingAndGlyphs">FBS</text>
 <!-- purple F -->
 <circle cx="884" cy="744" r="12" fill="url(#pf)"/>
 <path d="M879.500 750.500V739.500A1.500 1.500 0 0 1 881 738H890M883.500 750.500V743.500A1 1 0 0 1 884.500 742.500H888.500" stroke="#fff" stroke-width="1.500" stroke-linecap="round"/>
 <!-- remote desktop -->
 <ellipse cx="926" cy="753.300" rx="5.500" ry="1.800" fill="#c4c6ca"/>
 <path d="M923.500 747L929 747.500L929.500 752.500H923Z" fill="#d0d2d6"/>
 <path d="M919 733.300L937.300 735L936 748.300L917.300 746.600Z" fill="#c8ccd4"/>
 <path d="M919.800 734.200L936.300 735.800L935.200 747.300L918.300 745.800Z" fill="url(#rdg)"/>
 <circle cx="934.500" cy="750" r="5.800" fill="#b4b4b4"/><circle cx="934.500" cy="750" r="4.900" fill="#f2f2f2"/>
 <path d="M931.800 752.300L933.800 750L931.800 747.700M937.200 747.700L935.200 750L937.200 752.300" stroke="#1a9a3a" stroke-width="1.300"/>
 <!-- calculator -->
 <rect x="963" y="732" width="18" height="24" rx="2" fill="#5f6b78"/>
 <rect x="965.500" y="734.500" width="13" height="4.500" fill="#7ad8ff"/>
 <g fill="#d2d8e2"><rect x="965.500" y="741" width="3.600" height="3.400"/><rect x="970.200" y="741" width="3.600" height="3.400"/><rect x="965.500" y="745.600" width="3.600" height="3.400"/><rect x="970.200" y="745.600" width="3.600" height="3.400"/><rect x="965.500" y="750.200" width="3.600" height="3.400"/><rect x="970.200" y="750.200" width="3.600" height="3.400"/><rect x="974.900" y="741" width="3.600" height="3.400"/></g>
 <rect x="974.900" y="745.600" width="3.600" height="8" fill="#123f86"/>
 <!-- ppsspp-like -->
 <g fill="#9bd0e8" stroke="#6fb0d0" stroke-width=".8"><path d="M1011 734.500L1018 733.500L1019 741L1016 743.500L1012 742Z"/><path d="M1019.500 741.500L1026.500 738.500L1027.500 746L1021 747.500L1018 744.500Z"/><path d="M1004.500 742L1011 740.500L1014.500 743.500L1011.500 749L1005.500 749Z"/><path d="M1013 747L1016.500 745L1020 747.500L1020.500 754L1014 755.500Z"/></g>
 <!-- metaeditor 5 -->
 <path d="M1058 737H1069V752H1058Z" fill="#fbd42a"/>
 <path d="M1051 735L1063 732.500V754.500L1051 752Z" fill="#c98a10"/>
 <path d="M1051 752L1063 754.500V757L1051 755.500Z" fill="#a06c08"/>
 <text x="1057" y="745.500" font-family="Liberation Sans" font-weight="bold" font-size="11.500" fill="#fff" text-anchor="middle">5</text>
 <rect x="1056.500" y="760" width="7" height="2.500" rx="1.200" fill="#8a8a8a"/>
 <!-- chevron -->
 <path d="M1125.500 746.500L1130.700 741.500L1136 746.500" stroke="#222" stroke-width="1.500" stroke-linecap="round" stroke-linejoin="round"/>
 <!-- sync + red dot -->
 <g stroke="#222" stroke-width="1.300" stroke-linecap="round" stroke-linejoin="round"><path d="M1156.500 742A6.500 6.500 0 0 1 1168.500 740.500M1169 737V741H1165M1169 746.500A6.500 6.500 0 0 1 1157.500 748.500M1156.500 751.500V747.500H1160.500"/></g>
 <circle cx="1167" cy="748.300" r="3.800" fill="#f01414"/>
 <!-- globe -->
 <g stroke="#222" stroke-width="1.200"><circle cx="1194.500" cy="743.500" r="7"/><path d="M1187.500 743.500H1201.500M1194.500 736.500C1191 739 1191 748 1194.500 750.500M1194.500 736.500C1198 739 1198 748 1194.500 750.500M1188.500 740H1200.500"/></g>
 <circle cx="1198.500" cy="748" r="4.300" fill="#e6e6e4" stroke="#222" stroke-width="1.200"/><path d="M1195.800 750.700L1201.200 745.300" stroke="#222" stroke-width="1.200"/>
 <!-- speaker -->
 <g stroke="#222" stroke-width="1.200" stroke-linejoin="round" stroke-linecap="round"><path d="M1211.500 741.500H1214L1217.500 738.500V749.500L1214 746.500H1211.500Z"/><path d="M1219.800 741.500A3.500 3.500 0 0 1 1219.800 746.500M1222 739.500A6.500 6.500 0 0 1 1222 748.500M1224.300 737.500A9.500 9.500 0 0 1 1224.300 750.500"/></g>
 <!-- battery -->
 <g stroke="#222" stroke-width="1.300" stroke-linejoin="round"><path d="M1240 739.500H1247A2 2 0 0 1 1249 741.500V746.500A2 2 0 0 1 1247 748.500H1237.500A2 2 0 0 1 1235.500 746.500V744"/><path d="M1250.300 742.500V745.500" stroke-width="2"/></g>
 <path d="M1238.500 736L1235 742.500H1238L1236.500 747L1241 740.500H1238Z" fill="#222"/>
 <!-- bell -->
 <path d="M1332.500 750V749L1334 747V743.500A4.500 4.500 0 0 1 1338 739A4.500 4.500 0 0 1 1342.500 743.500V747L1344 749V750Z" fill="#222"/><path d="M1336.500 751.500A2 2 0 0 0 1340 751.500Z" fill="#222"/>
 <circle cx="1338.500" cy="742.800" r="2.800" fill="#e6e6e4"/>
 <text x="1336.500" y="745" font-family="Liberation Sans" font-weight="bold" font-size="5.500" fill="#222">z</text>
 <text x="1341.500" y="740.500" font-family="Liberation Sans" font-weight="bold" font-size="7.500" fill="#222">z</text>
</svg>
<div class="abs" style="left:1222px;top:10px;width:100px;text-align:right;font-size:12px;color:#222;line-height:14px;letter-spacing:.1px">1:17 AM</div>
<div class="abs" style="left:1222px;top:26px;width:100px;text-align:right;font-size:12px;color:#222;line-height:14px;letter-spacing:.1px">1/17/2026</div>
</div>
</body></html>
